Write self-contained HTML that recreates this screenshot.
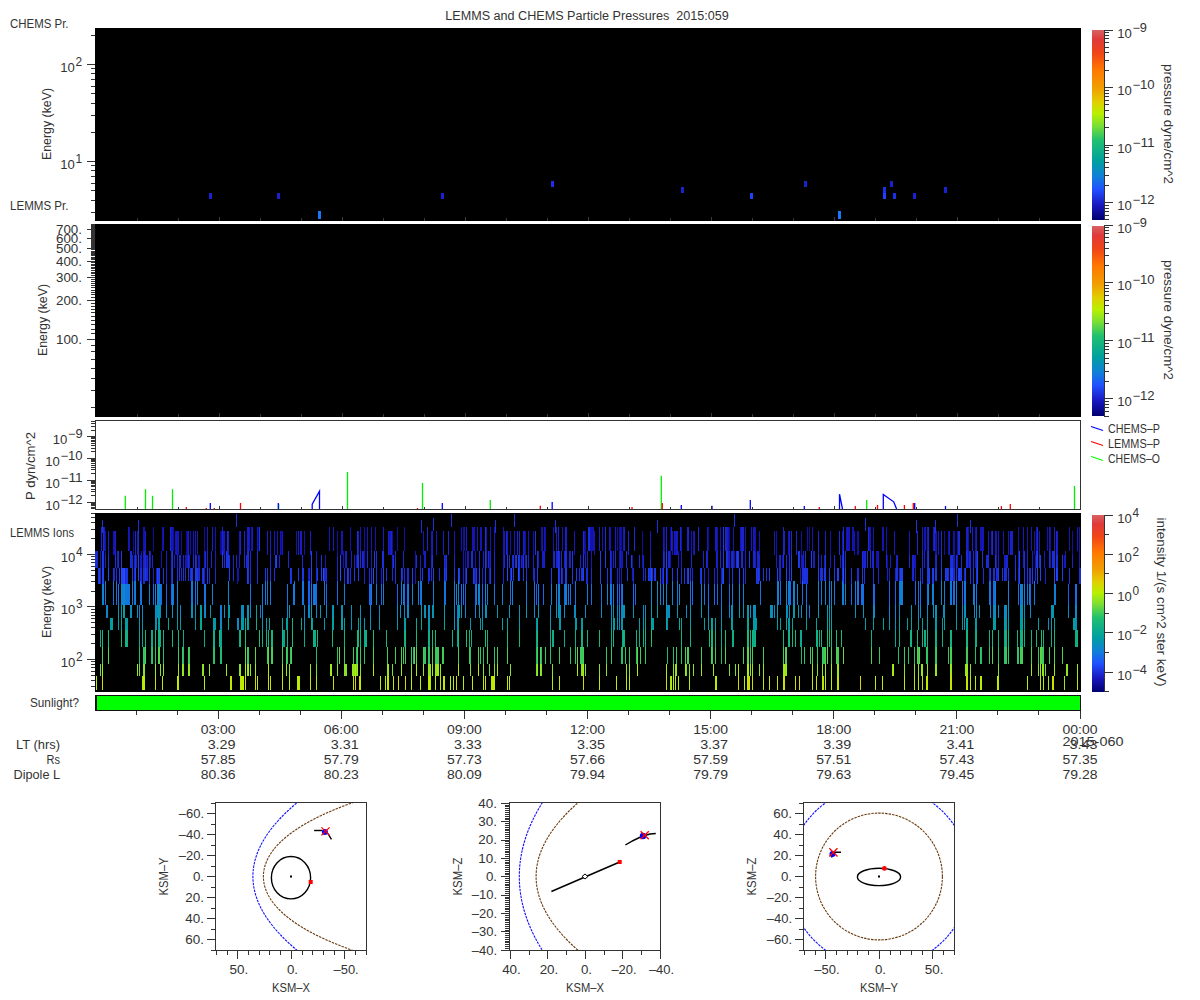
<!DOCTYPE html>
<html><head><meta charset="utf-8"><style>
html,body{margin:0;padding:0;background:#fff;}
svg{display:block;font-family:"Liberation Sans",sans-serif;}
</style></head><body>
<svg width="1200" height="1000" viewBox="0 0 1200 1000">
<text x="445.3" y="20" textLength="283.5" lengthAdjust="spacingAndGlyphs" font-size="12" fill="#333">LEMMS and CHEMS Particle Pressures  2015:059</text>
<rect x="95" y="28" width="986" height="193" fill="#000"/>
<line x1="91" y1="212.5" x2="95" y2="212.5" stroke="#333" stroke-width="1"/>
<line x1="91" y1="200.5" x2="95" y2="200.5" stroke="#333" stroke-width="1"/>
<line x1="91" y1="190.5" x2="95" y2="190.5" stroke="#333" stroke-width="1"/>
<line x1="91" y1="183.5" x2="95" y2="183.5" stroke="#333" stroke-width="1"/>
<line x1="91" y1="176.5" x2="95" y2="176.5" stroke="#333" stroke-width="1"/>
<line x1="91" y1="170.5" x2="95" y2="170.5" stroke="#333" stroke-width="1"/>
<line x1="91" y1="165.5" x2="95" y2="165.5" stroke="#333" stroke-width="1"/>
<line x1="87" y1="161.5" x2="95" y2="161.5" stroke="#333" stroke-width="1"/>
<line x1="91" y1="132.5" x2="95" y2="132.5" stroke="#333" stroke-width="1"/>
<line x1="91" y1="115.5" x2="95" y2="115.5" stroke="#333" stroke-width="1"/>
<line x1="91" y1="103.5" x2="95" y2="103.5" stroke="#333" stroke-width="1"/>
<line x1="91" y1="93.5" x2="95" y2="93.5" stroke="#333" stroke-width="1"/>
<line x1="91" y1="86.5" x2="95" y2="86.5" stroke="#333" stroke-width="1"/>
<line x1="91" y1="79.5" x2="95" y2="79.5" stroke="#333" stroke-width="1"/>
<line x1="91" y1="73.5" x2="95" y2="73.5" stroke="#333" stroke-width="1"/>
<line x1="91" y1="68.5" x2="95" y2="68.5" stroke="#333" stroke-width="1"/>
<line x1="87" y1="64.5" x2="95" y2="64.5" stroke="#333" stroke-width="1"/>
<line x1="91" y1="35.5" x2="95" y2="35.5" stroke="#333" stroke-width="1"/>
<text x="60.25" y="168.75" textLength="14.6" lengthAdjust="spacingAndGlyphs" font-size="12" fill="#333">10</text>
<text x="75.5" y="162.75" textLength="6.6" lengthAdjust="spacingAndGlyphs" font-size="12" fill="#333">1</text>
<text x="60.25" y="71.75" textLength="14.6" lengthAdjust="spacingAndGlyphs" font-size="12" fill="#333">10</text>
<text x="75.5" y="65.75" textLength="6.6" lengthAdjust="spacingAndGlyphs" font-size="12" fill="#333">2</text>
<text x="10" y="28" textLength="58.5" lengthAdjust="spacingAndGlyphs" font-size="12" fill="#333">CHEMS Pr.</text>
<text x="10" y="210" textLength="58.5" lengthAdjust="spacingAndGlyphs" font-size="12" fill="#333">LEMMS Pr.</text>
<text x="0" y="0" font-size="12" fill="#333" text-anchor="middle" textLength="72" lengthAdjust="spacingAndGlyphs" transform="translate(50.5,124) rotate(-90)">Energy (keV)</text>
<rect x="209" y="193" width="3" height="6" fill="#1a22d0"/>
<rect x="277" y="193" width="3" height="6" fill="#1a22d0"/>
<rect x="441" y="193" width="3" height="6" fill="#1a22d0"/>
<rect x="551" y="181" width="3" height="6" fill="#1a30e8"/>
<rect x="681" y="187" width="3" height="6" fill="#1a22d0"/>
<rect x="750" y="193" width="3" height="6" fill="#2040f8"/>
<rect x="804" y="181" width="3" height="6" fill="#1a22d0"/>
<rect x="883" y="187" width="3" height="6" fill="#1a30e8"/>
<rect x="883" y="193" width="3" height="6" fill="#2040ff"/>
<rect x="890" y="181" width="3" height="6" fill="#1a22d0"/>
<rect x="893" y="193" width="3" height="6" fill="#1a30e8"/>
<rect x="913" y="193" width="3" height="6" fill="#1a22d0"/>
<rect x="944" y="187" width="3" height="6" fill="#1a22d0"/>
<rect x="318" y="211" width="3" height="8" fill="#1a78f8"/>
<rect x="838" y="211" width="3" height="8" fill="#1a78f8"/>
<line x1="137.5" y1="218" x2="137.5" y2="221" stroke="#3a3a3a" stroke-width="1"/>
<line x1="178.5" y1="218" x2="178.5" y2="221" stroke="#3a3a3a" stroke-width="1"/>
<line x1="219.5" y1="217" x2="219.5" y2="221" stroke="#3a3a3a" stroke-width="1"/>
<line x1="260.5" y1="218" x2="260.5" y2="221" stroke="#3a3a3a" stroke-width="1"/>
<line x1="301.5" y1="218" x2="301.5" y2="221" stroke="#3a3a3a" stroke-width="1"/>
<line x1="342.5" y1="217" x2="342.5" y2="221" stroke="#3a3a3a" stroke-width="1"/>
<line x1="383.5" y1="218" x2="383.5" y2="221" stroke="#3a3a3a" stroke-width="1"/>
<line x1="424.5" y1="218" x2="424.5" y2="221" stroke="#3a3a3a" stroke-width="1"/>
<line x1="465.5" y1="217" x2="465.5" y2="221" stroke="#3a3a3a" stroke-width="1"/>
<line x1="506.5" y1="218" x2="506.5" y2="221" stroke="#3a3a3a" stroke-width="1"/>
<line x1="547.5" y1="218" x2="547.5" y2="221" stroke="#3a3a3a" stroke-width="1"/>
<line x1="588.5" y1="217" x2="588.5" y2="221" stroke="#3a3a3a" stroke-width="1"/>
<line x1="629.5" y1="218" x2="629.5" y2="221" stroke="#3a3a3a" stroke-width="1"/>
<line x1="670.5" y1="218" x2="670.5" y2="221" stroke="#3a3a3a" stroke-width="1"/>
<line x1="711.5" y1="217" x2="711.5" y2="221" stroke="#3a3a3a" stroke-width="1"/>
<line x1="752.5" y1="218" x2="752.5" y2="221" stroke="#3a3a3a" stroke-width="1"/>
<line x1="793.5" y1="218" x2="793.5" y2="221" stroke="#3a3a3a" stroke-width="1"/>
<line x1="834.5" y1="217" x2="834.5" y2="221" stroke="#3a3a3a" stroke-width="1"/>
<line x1="875.5" y1="218" x2="875.5" y2="221" stroke="#3a3a3a" stroke-width="1"/>
<line x1="916.5" y1="218" x2="916.5" y2="221" stroke="#3a3a3a" stroke-width="1"/>
<line x1="957.5" y1="217" x2="957.5" y2="221" stroke="#3a3a3a" stroke-width="1"/>
<line x1="998.5" y1="218" x2="998.5" y2="221" stroke="#3a3a3a" stroke-width="1"/>
<line x1="1039.5" y1="218" x2="1039.5" y2="221" stroke="#3a3a3a" stroke-width="1"/>
<rect x="95" y="224" width="986" height="193" fill="#000"/>
<line x1="137.5" y1="414" x2="137.5" y2="417" stroke="#3a3a3a" stroke-width="1"/>
<line x1="178.5" y1="414" x2="178.5" y2="417" stroke="#3a3a3a" stroke-width="1"/>
<line x1="219.5" y1="413" x2="219.5" y2="417" stroke="#3a3a3a" stroke-width="1"/>
<line x1="260.5" y1="414" x2="260.5" y2="417" stroke="#3a3a3a" stroke-width="1"/>
<line x1="301.5" y1="414" x2="301.5" y2="417" stroke="#3a3a3a" stroke-width="1"/>
<line x1="342.5" y1="413" x2="342.5" y2="417" stroke="#3a3a3a" stroke-width="1"/>
<line x1="383.5" y1="414" x2="383.5" y2="417" stroke="#3a3a3a" stroke-width="1"/>
<line x1="424.5" y1="414" x2="424.5" y2="417" stroke="#3a3a3a" stroke-width="1"/>
<line x1="465.5" y1="413" x2="465.5" y2="417" stroke="#3a3a3a" stroke-width="1"/>
<line x1="506.5" y1="414" x2="506.5" y2="417" stroke="#3a3a3a" stroke-width="1"/>
<line x1="547.5" y1="414" x2="547.5" y2="417" stroke="#3a3a3a" stroke-width="1"/>
<line x1="588.5" y1="413" x2="588.5" y2="417" stroke="#3a3a3a" stroke-width="1"/>
<line x1="629.5" y1="414" x2="629.5" y2="417" stroke="#3a3a3a" stroke-width="1"/>
<line x1="670.5" y1="414" x2="670.5" y2="417" stroke="#3a3a3a" stroke-width="1"/>
<line x1="711.5" y1="413" x2="711.5" y2="417" stroke="#3a3a3a" stroke-width="1"/>
<line x1="752.5" y1="414" x2="752.5" y2="417" stroke="#3a3a3a" stroke-width="1"/>
<line x1="793.5" y1="414" x2="793.5" y2="417" stroke="#3a3a3a" stroke-width="1"/>
<line x1="834.5" y1="413" x2="834.5" y2="417" stroke="#3a3a3a" stroke-width="1"/>
<line x1="875.5" y1="414" x2="875.5" y2="417" stroke="#3a3a3a" stroke-width="1"/>
<line x1="916.5" y1="414" x2="916.5" y2="417" stroke="#3a3a3a" stroke-width="1"/>
<line x1="957.5" y1="413" x2="957.5" y2="417" stroke="#3a3a3a" stroke-width="1"/>
<line x1="998.5" y1="414" x2="998.5" y2="417" stroke="#3a3a3a" stroke-width="1"/>
<line x1="1039.5" y1="414" x2="1039.5" y2="417" stroke="#3a3a3a" stroke-width="1"/>
<line x1="91" y1="407.5" x2="95" y2="407.5" stroke="#333" stroke-width="1"/>
<line x1="91" y1="390.5" x2="95" y2="390.5" stroke="#333" stroke-width="1"/>
<line x1="91" y1="378.5" x2="95" y2="378.5" stroke="#333" stroke-width="1"/>
<line x1="91" y1="368.5" x2="95" y2="368.5" stroke="#333" stroke-width="1"/>
<line x1="91" y1="359.5" x2="95" y2="359.5" stroke="#333" stroke-width="1"/>
<line x1="91" y1="351.5" x2="95" y2="351.5" stroke="#333" stroke-width="1"/>
<line x1="91" y1="345.5" x2="95" y2="345.5" stroke="#333" stroke-width="1"/>
<line x1="87" y1="339.5" x2="95" y2="339.5" stroke="#333" stroke-width="1"/>
<line x1="91" y1="333.5" x2="95" y2="333.5" stroke="#333" stroke-width="1"/>
<line x1="91" y1="329.5" x2="95" y2="329.5" stroke="#333" stroke-width="1"/>
<line x1="91" y1="324.5" x2="95" y2="324.5" stroke="#333" stroke-width="1"/>
<line x1="91" y1="320.5" x2="95" y2="320.5" stroke="#333" stroke-width="1"/>
<line x1="91" y1="316.5" x2="95" y2="316.5" stroke="#333" stroke-width="1"/>
<line x1="91" y1="312.5" x2="95" y2="312.5" stroke="#333" stroke-width="1"/>
<line x1="91" y1="309.5" x2="95" y2="309.5" stroke="#333" stroke-width="1"/>
<line x1="91" y1="306.5" x2="95" y2="306.5" stroke="#333" stroke-width="1"/>
<line x1="91" y1="303.5" x2="95" y2="303.5" stroke="#333" stroke-width="1"/>
<line x1="87" y1="300.5" x2="95" y2="300.5" stroke="#333" stroke-width="1"/>
<line x1="91" y1="297.5" x2="95" y2="297.5" stroke="#333" stroke-width="1"/>
<line x1="91" y1="294.5" x2="95" y2="294.5" stroke="#333" stroke-width="1"/>
<line x1="91" y1="292.5" x2="95" y2="292.5" stroke="#333" stroke-width="1"/>
<line x1="91" y1="290.5" x2="95" y2="290.5" stroke="#333" stroke-width="1"/>
<line x1="91" y1="287.5" x2="95" y2="287.5" stroke="#333" stroke-width="1"/>
<line x1="91" y1="285.5" x2="95" y2="285.5" stroke="#333" stroke-width="1"/>
<line x1="91" y1="283.5" x2="95" y2="283.5" stroke="#333" stroke-width="1"/>
<line x1="91" y1="281.5" x2="95" y2="281.5" stroke="#333" stroke-width="1"/>
<line x1="91" y1="279.5" x2="95" y2="279.5" stroke="#333" stroke-width="1"/>
<line x1="87" y1="277.5" x2="95" y2="277.5" stroke="#333" stroke-width="1"/>
<line x1="91" y1="275.5" x2="95" y2="275.5" stroke="#333" stroke-width="1"/>
<line x1="91" y1="273.5" x2="95" y2="273.5" stroke="#333" stroke-width="1"/>
<line x1="91" y1="272.5" x2="95" y2="272.5" stroke="#333" stroke-width="1"/>
<line x1="91" y1="270.5" x2="95" y2="270.5" stroke="#333" stroke-width="1"/>
<line x1="91" y1="268.5" x2="95" y2="268.5" stroke="#333" stroke-width="1"/>
<line x1="91" y1="267.5" x2="95" y2="267.5" stroke="#333" stroke-width="1"/>
<line x1="91" y1="265.5" x2="95" y2="265.5" stroke="#333" stroke-width="1"/>
<line x1="91" y1="264.5" x2="95" y2="264.5" stroke="#333" stroke-width="1"/>
<line x1="91" y1="262.5" x2="95" y2="262.5" stroke="#333" stroke-width="1"/>
<line x1="87" y1="261.5" x2="95" y2="261.5" stroke="#333" stroke-width="1"/>
<line x1="91" y1="259.5" x2="95" y2="259.5" stroke="#333" stroke-width="1"/>
<line x1="91" y1="258.5" x2="95" y2="258.5" stroke="#333" stroke-width="1"/>
<line x1="91" y1="257.5" x2="95" y2="257.5" stroke="#333" stroke-width="1"/>
<line x1="91" y1="255.5" x2="95" y2="255.5" stroke="#333" stroke-width="1"/>
<line x1="91" y1="254.5" x2="95" y2="254.5" stroke="#333" stroke-width="1"/>
<line x1="91" y1="253.5" x2="95" y2="253.5" stroke="#333" stroke-width="1"/>
<line x1="91" y1="252.5" x2="95" y2="252.5" stroke="#333" stroke-width="1"/>
<line x1="91" y1="251.5" x2="95" y2="251.5" stroke="#333" stroke-width="1"/>
<line x1="91" y1="249.5" x2="95" y2="249.5" stroke="#333" stroke-width="1"/>
<line x1="87" y1="248.5" x2="95" y2="248.5" stroke="#333" stroke-width="1"/>
<line x1="91" y1="247.5" x2="95" y2="247.5" stroke="#333" stroke-width="1"/>
<line x1="91" y1="246.5" x2="95" y2="246.5" stroke="#333" stroke-width="1"/>
<line x1="91" y1="245.5" x2="95" y2="245.5" stroke="#333" stroke-width="1"/>
<line x1="91" y1="244.5" x2="95" y2="244.5" stroke="#333" stroke-width="1"/>
<line x1="91" y1="243.5" x2="95" y2="243.5" stroke="#333" stroke-width="1"/>
<line x1="91" y1="242.5" x2="95" y2="242.5" stroke="#333" stroke-width="1"/>
<line x1="91" y1="241.5" x2="95" y2="241.5" stroke="#333" stroke-width="1"/>
<line x1="91" y1="240.5" x2="95" y2="240.5" stroke="#333" stroke-width="1"/>
<line x1="91" y1="239.5" x2="95" y2="239.5" stroke="#333" stroke-width="1"/>
<line x1="87" y1="238.5" x2="95" y2="238.5" stroke="#333" stroke-width="1"/>
<line x1="91" y1="237.5" x2="95" y2="237.5" stroke="#333" stroke-width="1"/>
<line x1="91" y1="236.5" x2="95" y2="236.5" stroke="#333" stroke-width="1"/>
<line x1="91" y1="235.5" x2="95" y2="235.5" stroke="#333" stroke-width="1"/>
<line x1="91" y1="234.5" x2="95" y2="234.5" stroke="#333" stroke-width="1"/>
<line x1="91" y1="233.5" x2="95" y2="233.5" stroke="#333" stroke-width="1"/>
<line x1="91" y1="233.5" x2="95" y2="233.5" stroke="#333" stroke-width="1"/>
<line x1="91" y1="232.5" x2="95" y2="232.5" stroke="#333" stroke-width="1"/>
<line x1="91" y1="231.5" x2="95" y2="231.5" stroke="#333" stroke-width="1"/>
<line x1="91" y1="230.5" x2="95" y2="230.5" stroke="#333" stroke-width="1"/>
<line x1="87" y1="229.5" x2="95" y2="229.5" stroke="#333" stroke-width="1"/>
<line x1="91" y1="228.5" x2="95" y2="228.5" stroke="#333" stroke-width="1"/>
<line x1="91" y1="228.5" x2="95" y2="228.5" stroke="#333" stroke-width="1"/>
<line x1="91" y1="227.5" x2="95" y2="227.5" stroke="#333" stroke-width="1"/>
<line x1="91" y1="226.5" x2="95" y2="226.5" stroke="#333" stroke-width="1"/>
<line x1="91" y1="225.5" x2="95" y2="225.5" stroke="#333" stroke-width="1"/>
<line x1="91" y1="225.5" x2="95" y2="225.5" stroke="#333" stroke-width="1"/>
<line x1="91" y1="224.5" x2="95" y2="224.5" stroke="#333" stroke-width="1"/>
<text x="82" y="343.8" text-anchor="end" textLength="26" lengthAdjust="spacingAndGlyphs" font-size="12" fill="#333">100.</text>
<text x="82" y="304.78651256194803" text-anchor="end" textLength="26" lengthAdjust="spacingAndGlyphs" font-size="12" fill="#333">200.</text>
<text x="82" y="281.9650853883318" text-anchor="end" textLength="26" lengthAdjust="spacingAndGlyphs" font-size="12" fill="#333">300.</text>
<text x="82" y="265.7730251238961" text-anchor="end" textLength="26" lengthAdjust="spacingAndGlyphs" font-size="12" fill="#333">400.</text>
<text x="82" y="253.21348743805197" text-anchor="end" textLength="26" lengthAdjust="spacingAndGlyphs" font-size="12" fill="#333">500.</text>
<text x="82" y="242.9515979502798" text-anchor="end" textLength="26" lengthAdjust="spacingAndGlyphs" font-size="12" fill="#333">600.</text>
<text x="82" y="234.27529401415234" text-anchor="end" textLength="26" lengthAdjust="spacingAndGlyphs" font-size="12" fill="#333">700.</text>
<text x="0" y="0" font-size="12" fill="#333" text-anchor="middle" textLength="72" lengthAdjust="spacingAndGlyphs" transform="translate(47,320) rotate(-90)">Energy (keV)</text>
<defs><linearGradient id="cb" x1="0" y1="0" x2="0" y2="1"><stop offset="0.0" stop-color="#d86262"/><stop offset="0.05" stop-color="#e03a3a"/><stop offset="0.12" stop-color="#f04418"/><stop offset="0.21" stop-color="#ff7800"/><stop offset="0.31" stop-color="#f0a000"/><stop offset="0.38" stop-color="#e0d000"/><stop offset="0.44" stop-color="#b8f000"/><stop offset="0.5" stop-color="#80e030"/><stop offset="0.58" stop-color="#20c070"/><stop offset="0.69" stop-color="#00a0a0"/><stop offset="0.77" stop-color="#1080d8"/><stop offset="0.84" stop-color="#2050ff"/><stop offset="0.92" stop-color="#1818c0"/><stop offset="1.0" stop-color="#000070"/></linearGradient></defs>
<rect x="1092" y="30" width="12" height="190" fill="url(#cb)"/>
<line x1="1104.5" y1="30" x2="1104.5" y2="220" stroke="#333" stroke-width="1"/>
<line x1="1104" y1="219.5" x2="1109" y2="219.5" stroke="#333" stroke-width="1"/>
<line x1="1104" y1="215.5" x2="1109" y2="215.5" stroke="#333" stroke-width="1"/>
<line x1="1104" y1="211.5" x2="1109" y2="211.5" stroke="#333" stroke-width="1"/>
<line x1="1104" y1="208.5" x2="1109" y2="208.5" stroke="#333" stroke-width="1"/>
<line x1="1104" y1="205.5" x2="1109" y2="205.5" stroke="#333" stroke-width="1"/>
<line x1="1104" y1="202.5" x2="1113" y2="202.5" stroke="#333" stroke-width="1"/>
<line x1="1104" y1="185.5" x2="1109" y2="185.5" stroke="#333" stroke-width="1"/>
<line x1="1104" y1="175.5" x2="1109" y2="175.5" stroke="#333" stroke-width="1"/>
<line x1="1104" y1="167.5" x2="1109" y2="167.5" stroke="#333" stroke-width="1"/>
<line x1="1104" y1="162.5" x2="1109" y2="162.5" stroke="#333" stroke-width="1"/>
<line x1="1104" y1="157.5" x2="1109" y2="157.5" stroke="#333" stroke-width="1"/>
<line x1="1104" y1="153.5" x2="1109" y2="153.5" stroke="#333" stroke-width="1"/>
<line x1="1104" y1="150.5" x2="1109" y2="150.5" stroke="#333" stroke-width="1"/>
<line x1="1104" y1="147.5" x2="1109" y2="147.5" stroke="#333" stroke-width="1"/>
<line x1="1104" y1="145.5" x2="1113" y2="145.5" stroke="#333" stroke-width="1"/>
<line x1="1104" y1="127.5" x2="1109" y2="127.5" stroke="#333" stroke-width="1"/>
<line x1="1104" y1="117.5" x2="1109" y2="117.5" stroke="#333" stroke-width="1"/>
<line x1="1104" y1="110.5" x2="1109" y2="110.5" stroke="#333" stroke-width="1"/>
<line x1="1104" y1="104.5" x2="1109" y2="104.5" stroke="#333" stroke-width="1"/>
<line x1="1104" y1="100.5" x2="1109" y2="100.5" stroke="#333" stroke-width="1"/>
<line x1="1104" y1="96.5" x2="1109" y2="96.5" stroke="#333" stroke-width="1"/>
<line x1="1104" y1="93.5" x2="1109" y2="93.5" stroke="#333" stroke-width="1"/>
<line x1="1104" y1="90.5" x2="1109" y2="90.5" stroke="#333" stroke-width="1"/>
<line x1="1104" y1="87.5" x2="1113" y2="87.5" stroke="#333" stroke-width="1"/>
<line x1="1104" y1="70.5" x2="1109" y2="70.5" stroke="#333" stroke-width="1"/>
<line x1="1104" y1="60.5" x2="1109" y2="60.5" stroke="#333" stroke-width="1"/>
<line x1="1104" y1="52.5" x2="1109" y2="52.5" stroke="#333" stroke-width="1"/>
<line x1="1104" y1="47.5" x2="1109" y2="47.5" stroke="#333" stroke-width="1"/>
<line x1="1104" y1="42.5" x2="1109" y2="42.5" stroke="#333" stroke-width="1"/>
<line x1="1104" y1="38.5" x2="1109" y2="38.5" stroke="#333" stroke-width="1"/>
<line x1="1104" y1="35.5" x2="1109" y2="35.5" stroke="#333" stroke-width="1"/>
<line x1="1104" y1="32.5" x2="1109" y2="32.5" stroke="#333" stroke-width="1"/>
<line x1="1104" y1="30.5" x2="1113" y2="30.5" stroke="#333" stroke-width="1"/>
<text x="1117.15" y="37.75" textLength="14.6" lengthAdjust="spacingAndGlyphs" font-size="12" fill="#333">10</text>
<text x="1132.4" y="31.75" textLength="14.6" lengthAdjust="spacingAndGlyphs" font-size="12" fill="#333">−9</text>
<text x="1117.15" y="94.75" textLength="14.6" lengthAdjust="spacingAndGlyphs" font-size="12" fill="#333">10</text>
<text x="1132.4" y="88.75" textLength="22.2" lengthAdjust="spacingAndGlyphs" font-size="12" fill="#333">−10</text>
<text x="1117.15" y="152.75" textLength="14.6" lengthAdjust="spacingAndGlyphs" font-size="12" fill="#333">10</text>
<text x="1132.4" y="146.75" textLength="22.2" lengthAdjust="spacingAndGlyphs" font-size="12" fill="#333">−11</text>
<text x="1117.15" y="209.75" textLength="14.6" lengthAdjust="spacingAndGlyphs" font-size="12" fill="#333">10</text>
<text x="1132.4" y="203.75" textLength="22.2" lengthAdjust="spacingAndGlyphs" font-size="12" fill="#333">−12</text>
<text x="0" y="0" font-size="12" fill="#333" text-anchor="middle" textLength="120" lengthAdjust="spacingAndGlyphs" transform="translate(1164,124) rotate(90)">pressure dyne/cm^2</text>
<rect x="1092" y="226" width="12" height="190" fill="url(#cb)"/>
<line x1="1104.5" y1="226" x2="1104.5" y2="416" stroke="#333" stroke-width="1"/>
<line x1="1104" y1="416.5" x2="1109" y2="416.5" stroke="#333" stroke-width="1"/>
<line x1="1104" y1="411.5" x2="1109" y2="411.5" stroke="#333" stroke-width="1"/>
<line x1="1104" y1="407.5" x2="1109" y2="407.5" stroke="#333" stroke-width="1"/>
<line x1="1104" y1="404.5" x2="1109" y2="404.5" stroke="#333" stroke-width="1"/>
<line x1="1104" y1="401.5" x2="1109" y2="401.5" stroke="#333" stroke-width="1"/>
<line x1="1104" y1="398.5" x2="1113" y2="398.5" stroke="#333" stroke-width="1"/>
<line x1="1104" y1="381.5" x2="1109" y2="381.5" stroke="#333" stroke-width="1"/>
<line x1="1104" y1="371.5" x2="1109" y2="371.5" stroke="#333" stroke-width="1"/>
<line x1="1104" y1="363.5" x2="1109" y2="363.5" stroke="#333" stroke-width="1"/>
<line x1="1104" y1="358.5" x2="1109" y2="358.5" stroke="#333" stroke-width="1"/>
<line x1="1104" y1="353.5" x2="1109" y2="353.5" stroke="#333" stroke-width="1"/>
<line x1="1104" y1="349.5" x2="1109" y2="349.5" stroke="#333" stroke-width="1"/>
<line x1="1104" y1="346.5" x2="1109" y2="346.5" stroke="#333" stroke-width="1"/>
<line x1="1104" y1="343.5" x2="1109" y2="343.5" stroke="#333" stroke-width="1"/>
<line x1="1104" y1="340.5" x2="1113" y2="340.5" stroke="#333" stroke-width="1"/>
<line x1="1104" y1="323.5" x2="1109" y2="323.5" stroke="#333" stroke-width="1"/>
<line x1="1104" y1="313.5" x2="1109" y2="313.5" stroke="#333" stroke-width="1"/>
<line x1="1104" y1="305.5" x2="1109" y2="305.5" stroke="#333" stroke-width="1"/>
<line x1="1104" y1="300.5" x2="1109" y2="300.5" stroke="#333" stroke-width="1"/>
<line x1="1104" y1="295.5" x2="1109" y2="295.5" stroke="#333" stroke-width="1"/>
<line x1="1104" y1="291.5" x2="1109" y2="291.5" stroke="#333" stroke-width="1"/>
<line x1="1104" y1="288.5" x2="1109" y2="288.5" stroke="#333" stroke-width="1"/>
<line x1="1104" y1="285.5" x2="1109" y2="285.5" stroke="#333" stroke-width="1"/>
<line x1="1104" y1="282.5" x2="1113" y2="282.5" stroke="#333" stroke-width="1"/>
<line x1="1104" y1="265.5" x2="1109" y2="265.5" stroke="#333" stroke-width="1"/>
<line x1="1104" y1="255.5" x2="1109" y2="255.5" stroke="#333" stroke-width="1"/>
<line x1="1104" y1="248.5" x2="1109" y2="248.5" stroke="#333" stroke-width="1"/>
<line x1="1104" y1="242.5" x2="1109" y2="242.5" stroke="#333" stroke-width="1"/>
<line x1="1104" y1="237.5" x2="1109" y2="237.5" stroke="#333" stroke-width="1"/>
<line x1="1104" y1="233.5" x2="1109" y2="233.5" stroke="#333" stroke-width="1"/>
<line x1="1104" y1="230.5" x2="1109" y2="230.5" stroke="#333" stroke-width="1"/>
<line x1="1104" y1="227.5" x2="1109" y2="227.5" stroke="#333" stroke-width="1"/>
<line x1="1104" y1="225.5" x2="1113" y2="225.5" stroke="#333" stroke-width="1"/>
<text x="1117.15" y="232.75" textLength="14.6" lengthAdjust="spacingAndGlyphs" font-size="12" fill="#333">10</text>
<text x="1132.4" y="226.75" textLength="14.6" lengthAdjust="spacingAndGlyphs" font-size="12" fill="#333">−9</text>
<text x="1117.15" y="289.75" textLength="14.6" lengthAdjust="spacingAndGlyphs" font-size="12" fill="#333">10</text>
<text x="1132.4" y="283.75" textLength="22.2" lengthAdjust="spacingAndGlyphs" font-size="12" fill="#333">−10</text>
<text x="1117.15" y="347.75" textLength="14.6" lengthAdjust="spacingAndGlyphs" font-size="12" fill="#333">10</text>
<text x="1132.4" y="341.75" textLength="22.2" lengthAdjust="spacingAndGlyphs" font-size="12" fill="#333">−11</text>
<text x="1117.15" y="405.75" textLength="14.6" lengthAdjust="spacingAndGlyphs" font-size="12" fill="#333">10</text>
<text x="1132.4" y="399.75" textLength="22.2" lengthAdjust="spacingAndGlyphs" font-size="12" fill="#333">−12</text>
<text x="0" y="0" font-size="12" fill="#333" text-anchor="middle" textLength="120" lengthAdjust="spacingAndGlyphs" transform="translate(1164,320) rotate(90)">pressure dyne/cm^2</text>
<rect x="95.5" y="420.5" width="985" height="89.0" fill="#fff" stroke="#333" stroke-width="1"/>
<line x1="91" y1="508.5" x2="95" y2="508.5" stroke="#333" stroke-width="1"/>
<line x1="91" y1="507.5" x2="95" y2="507.5" stroke="#333" stroke-width="1"/>
<line x1="91" y1="505.5" x2="95" y2="505.5" stroke="#333" stroke-width="1"/>
<line x1="91" y1="504.5" x2="95" y2="504.5" stroke="#333" stroke-width="1"/>
<line x1="91" y1="503.5" x2="95" y2="503.5" stroke="#333" stroke-width="1"/>
<line x1="87" y1="502.5" x2="95" y2="502.5" stroke="#333" stroke-width="1"/>
<line x1="91" y1="495.5" x2="95" y2="495.5" stroke="#333" stroke-width="1"/>
<line x1="91" y1="491.5" x2="95" y2="491.5" stroke="#333" stroke-width="1"/>
<line x1="91" y1="489.5" x2="95" y2="489.5" stroke="#333" stroke-width="1"/>
<line x1="91" y1="486.5" x2="95" y2="486.5" stroke="#333" stroke-width="1"/>
<line x1="91" y1="485.5" x2="95" y2="485.5" stroke="#333" stroke-width="1"/>
<line x1="91" y1="483.5" x2="95" y2="483.5" stroke="#333" stroke-width="1"/>
<line x1="91" y1="482.5" x2="95" y2="482.5" stroke="#333" stroke-width="1"/>
<line x1="91" y1="481.5" x2="95" y2="481.5" stroke="#333" stroke-width="1"/>
<line x1="87" y1="480.5" x2="95" y2="480.5" stroke="#333" stroke-width="1"/>
<line x1="91" y1="473.5" x2="95" y2="473.5" stroke="#333" stroke-width="1"/>
<line x1="91" y1="469.5" x2="95" y2="469.5" stroke="#333" stroke-width="1"/>
<line x1="91" y1="467.5" x2="95" y2="467.5" stroke="#333" stroke-width="1"/>
<line x1="91" y1="465.5" x2="95" y2="465.5" stroke="#333" stroke-width="1"/>
<line x1="91" y1="463.5" x2="95" y2="463.5" stroke="#333" stroke-width="1"/>
<line x1="91" y1="461.5" x2="95" y2="461.5" stroke="#333" stroke-width="1"/>
<line x1="91" y1="460.5" x2="95" y2="460.5" stroke="#333" stroke-width="1"/>
<line x1="91" y1="459.5" x2="95" y2="459.5" stroke="#333" stroke-width="1"/>
<line x1="87" y1="458.5" x2="95" y2="458.5" stroke="#333" stroke-width="1"/>
<line x1="91" y1="451.5" x2="95" y2="451.5" stroke="#333" stroke-width="1"/>
<line x1="91" y1="448.5" x2="95" y2="448.5" stroke="#333" stroke-width="1"/>
<line x1="91" y1="445.5" x2="95" y2="445.5" stroke="#333" stroke-width="1"/>
<line x1="91" y1="443.5" x2="95" y2="443.5" stroke="#333" stroke-width="1"/>
<line x1="91" y1="441.5" x2="95" y2="441.5" stroke="#333" stroke-width="1"/>
<line x1="91" y1="440.5" x2="95" y2="440.5" stroke="#333" stroke-width="1"/>
<line x1="91" y1="438.5" x2="95" y2="438.5" stroke="#333" stroke-width="1"/>
<line x1="91" y1="437.5" x2="95" y2="437.5" stroke="#333" stroke-width="1"/>
<line x1="87" y1="436.5" x2="95" y2="436.5" stroke="#333" stroke-width="1"/>
<line x1="91" y1="430.5" x2="95" y2="430.5" stroke="#333" stroke-width="1"/>
<line x1="91" y1="426.5" x2="95" y2="426.5" stroke="#333" stroke-width="1"/>
<line x1="91" y1="423.5" x2="95" y2="423.5" stroke="#333" stroke-width="1"/>
<line x1="91" y1="421.5" x2="95" y2="421.5" stroke="#333" stroke-width="1"/>
<text x="52.75" y="443.75" textLength="14.6" lengthAdjust="spacingAndGlyphs" font-size="12" fill="#333">10</text>
<text x="68.0" y="437.75" textLength="14.6" lengthAdjust="spacingAndGlyphs" font-size="12" fill="#333">−9</text>
<text x="45.15" y="465.75" textLength="14.6" lengthAdjust="spacingAndGlyphs" font-size="12" fill="#333">10</text>
<text x="60.4" y="459.75" textLength="22.2" lengthAdjust="spacingAndGlyphs" font-size="12" fill="#333">−10</text>
<text x="45.15" y="487.75" textLength="14.6" lengthAdjust="spacingAndGlyphs" font-size="12" fill="#333">10</text>
<text x="60.4" y="481.75" textLength="22.2" lengthAdjust="spacingAndGlyphs" font-size="12" fill="#333">−11</text>
<text x="45.15" y="509.75" textLength="14.6" lengthAdjust="spacingAndGlyphs" font-size="12" fill="#333">10</text>
<text x="60.4" y="503.75" textLength="22.2" lengthAdjust="spacingAndGlyphs" font-size="12" fill="#333">−12</text>
<text x="0" y="0" font-size="12" fill="#333" text-anchor="middle" textLength="68" lengthAdjust="spacingAndGlyphs" transform="translate(35,466) rotate(-90)">P dyn/cm^2</text>
<line x1="1091" y1="426.5" x2="1103" y2="430.5" stroke="#0000ff" stroke-width="1.3"/>
<text x="1108" y="433" textLength="52" lengthAdjust="spacingAndGlyphs" font-size="12" fill="#333">CHEMS–P</text>
<line x1="1091" y1="441.5" x2="1103" y2="445.5" stroke="#ff0000" stroke-width="1.3"/>
<text x="1108" y="448" textLength="52" lengthAdjust="spacingAndGlyphs" font-size="12" fill="#333">LEMMS–P</text>
<line x1="1091" y1="456.5" x2="1103" y2="460.5" stroke="#00ff00" stroke-width="1.3"/>
<text x="1108" y="463" textLength="52" lengthAdjust="spacingAndGlyphs" font-size="12" fill="#333">CHEMS–O</text>
<line x1="125.3" y1="509" x2="125.3" y2="495.8" stroke="#00ee00" stroke-width="1.3"/>
<line x1="145.5" y1="509" x2="145.5" y2="489.2" stroke="#00ee00" stroke-width="1.3"/>
<line x1="152.5" y1="509" x2="152.5" y2="495.8" stroke="#00ee00" stroke-width="1.3"/>
<line x1="172.5" y1="509" x2="172.5" y2="489.2" stroke="#00ee00" stroke-width="1.3"/>
<line x1="347.5" y1="509" x2="347.5" y2="472" stroke="#00ee00" stroke-width="1.3"/>
<line x1="422.5" y1="509" x2="422.5" y2="483" stroke="#00ee00" stroke-width="1.3"/>
<line x1="490.3" y1="509" x2="490.3" y2="500" stroke="#00ee00" stroke-width="1.3"/>
<line x1="661.3" y1="509" x2="661.3" y2="475.8" stroke="#00ee00" stroke-width="1.3"/>
<line x1="866.7" y1="509" x2="866.7" y2="500" stroke="#00ee00" stroke-width="1.3"/>
<line x1="1074.5" y1="509" x2="1074.5" y2="486" stroke="#00ee00" stroke-width="1.3"/>
<line x1="278.7" y1="509" x2="278.7" y2="504" stroke="#00ee00" stroke-width="1.3"/>
<line x1="186.3" y1="509" x2="186.3" y2="507" stroke="#ff0000" stroke-width="1.3"/>
<line x1="206.3" y1="509" x2="206.3" y2="508" stroke="#ff0000" stroke-width="1.3"/>
<line x1="214.3" y1="509" x2="214.3" y2="508" stroke="#ff0000" stroke-width="1.3"/>
<line x1="240.5" y1="509" x2="240.5" y2="503" stroke="#ff0000" stroke-width="1.3"/>
<line x1="540.3" y1="509" x2="540.3" y2="505.8" stroke="#ff0000" stroke-width="1.3"/>
<line x1="632" y1="509" x2="632" y2="507" stroke="#ff0000" stroke-width="1.3"/>
<line x1="662.3" y1="509" x2="662.3" y2="503" stroke="#ff0000" stroke-width="1.3"/>
<line x1="819.3" y1="509" x2="819.3" y2="507" stroke="#ff0000" stroke-width="1.3"/>
<line x1="855.3" y1="509" x2="855.3" y2="506" stroke="#ff0000" stroke-width="1.3"/>
<line x1="877.5" y1="509" x2="877.5" y2="505" stroke="#ff0000" stroke-width="1.3"/>
<line x1="904.4" y1="509" x2="904.4" y2="505" stroke="#ff0000" stroke-width="1.3"/>
<line x1="913.3" y1="509" x2="913.3" y2="503" stroke="#ff0000" stroke-width="1.3"/>
<line x1="1001.4" y1="509" x2="1001.4" y2="506" stroke="#ff0000" stroke-width="1.3"/>
<line x1="1010.3" y1="509" x2="1010.3" y2="504" stroke="#ff0000" stroke-width="1.3"/>
<line x1="417.5" y1="509" x2="417.5" y2="508" stroke="#ff0000" stroke-width="1.3"/>
<line x1="210.3" y1="509" x2="210.3" y2="503" stroke="#0000ff" stroke-width="1.3"/>
<line x1="278.3" y1="509" x2="278.3" y2="503" stroke="#0000ff" stroke-width="1.3"/>
<line x1="442.3" y1="509" x2="442.3" y2="503" stroke="#0000ff" stroke-width="1.3"/>
<line x1="552.2" y1="509" x2="552.2" y2="502" stroke="#0000ff" stroke-width="1.3"/>
<line x1="681.3" y1="509" x2="681.3" y2="505" stroke="#0000ff" stroke-width="1.3"/>
<line x1="712" y1="509" x2="712" y2="505.8" stroke="#0000ff" stroke-width="1.3"/>
<line x1="750.3" y1="509" x2="750.3" y2="500" stroke="#0000ff" stroke-width="1.3"/>
<line x1="804.3" y1="509" x2="804.3" y2="506" stroke="#0000ff" stroke-width="1.3"/>
<line x1="945.5" y1="509" x2="945.5" y2="506" stroke="#0000ff" stroke-width="1.3"/>
<line x1="914.7" y1="509" x2="914.7" y2="503" stroke="#0000ff" stroke-width="1.3"/>
<polyline points="312.2,509 312.2,504.2 319.5,491.2 319.5,509" fill="none" stroke="#0000ff" stroke-width="1.3"/>
<polyline points="839.5,509 839.5,494.2 842.5,509" fill="none" stroke="#0000ff" stroke-width="1.3"/>
<polyline points="883.3,509 883.3,494.4 893.7,501.8 896.6,509" fill="none" stroke="#0000ff" stroke-width="1.3"/>
<line x1="137.5" y1="507" x2="137.5" y2="509" stroke="#333" stroke-width="1"/>
<line x1="178.5" y1="507" x2="178.5" y2="509" stroke="#333" stroke-width="1"/>
<line x1="219.5" y1="506" x2="219.5" y2="509" stroke="#333" stroke-width="1"/>
<line x1="260.5" y1="507" x2="260.5" y2="509" stroke="#333" stroke-width="1"/>
<line x1="301.5" y1="507" x2="301.5" y2="509" stroke="#333" stroke-width="1"/>
<line x1="342.5" y1="506" x2="342.5" y2="509" stroke="#333" stroke-width="1"/>
<line x1="383.5" y1="507" x2="383.5" y2="509" stroke="#333" stroke-width="1"/>
<line x1="424.5" y1="507" x2="424.5" y2="509" stroke="#333" stroke-width="1"/>
<line x1="465.5" y1="506" x2="465.5" y2="509" stroke="#333" stroke-width="1"/>
<line x1="506.5" y1="507" x2="506.5" y2="509" stroke="#333" stroke-width="1"/>
<line x1="547.5" y1="507" x2="547.5" y2="509" stroke="#333" stroke-width="1"/>
<line x1="588.5" y1="506" x2="588.5" y2="509" stroke="#333" stroke-width="1"/>
<line x1="629.5" y1="507" x2="629.5" y2="509" stroke="#333" stroke-width="1"/>
<line x1="670.5" y1="507" x2="670.5" y2="509" stroke="#333" stroke-width="1"/>
<line x1="711.5" y1="506" x2="711.5" y2="509" stroke="#333" stroke-width="1"/>
<line x1="752.5" y1="507" x2="752.5" y2="509" stroke="#333" stroke-width="1"/>
<line x1="793.5" y1="507" x2="793.5" y2="509" stroke="#333" stroke-width="1"/>
<line x1="834.5" y1="506" x2="834.5" y2="509" stroke="#333" stroke-width="1"/>
<line x1="875.5" y1="507" x2="875.5" y2="509" stroke="#333" stroke-width="1"/>
<line x1="916.5" y1="507" x2="916.5" y2="509" stroke="#333" stroke-width="1"/>
<line x1="957.5" y1="506" x2="957.5" y2="509" stroke="#333" stroke-width="1"/>
<line x1="998.5" y1="507" x2="998.5" y2="509" stroke="#333" stroke-width="1"/>
<line x1="1039.5" y1="507" x2="1039.5" y2="509" stroke="#333" stroke-width="1"/>
<rect x="95" y="513" width="986" height="179" fill="#000"/>
<path fill="#1b2dd8" d="M95 551h1v17h-1zM96 551h1v17h-1zM113 568h1v13h-1zM116 568h1v13h-1zM118 551h1v17h-1zM134 568h1v13h-1zM141 568h1v16h-1zM143 568h1v16h-1zM149 551h1v17h-1zM185 568h1v13h-1zM190 568h1v13h-1zM199 568h1v13h-1zM227 531h1v24h-1zM244 555h1v13h-1zM257 551h1v17h-1zM326 568h1v16h-1zM350 568h1v16h-1zM357 531h1v24h-1zM367 551h1v17h-1zM376 551h1v17h-1zM402 568h1v13h-1zM416 555h1v13h-1zM428 568h1v16h-1zM431 568h1v13h-1zM472 551h1v17h-1zM474 568h1v16h-1zM494 568h1v16h-1zM509 555h1v13h-1zM513 555h1v13h-1zM579 568h1v13h-1zM587 568h1v16h-1zM588 527h1v24h-1zM605 527h1v24h-1zM615 551h1v17h-1zM645 568h1v13h-1zM690 568h1v13h-1zM727 551h1v17h-1zM780 568h1v13h-1zM783 551h1v17h-1zM786 555h1v13h-1zM789 555h1v13h-1zM803 568h1v16h-1zM805 551h1v17h-1zM806 568h1v16h-1zM820 568h1v13h-1zM822 568h1v13h-1zM843 527h1v24h-1zM845 551h1v17h-1zM867 551h1v17h-1zM920 568h1v13h-1zM922 568h1v16h-1zM948 568h1v13h-1zM950 555h1v13h-1zM954 568h1v13h-1zM966 551h1v17h-1zM983 568h1v16h-1zM993 568h1v13h-1zM994 568h1v13h-1zM996 568h1v13h-1zM997 568h1v13h-1zM1004 568h1v13h-1zM1005 568h1v13h-1zM1024 551h1v17h-1zM1039 555h1v13h-1zM1049 551h1v17h-1zM1052 551h1v17h-1zM1053 551h1v17h-1zM1057 555h1v13h-1zM1069 568h1v16h-1zM1079 568h1v16h-1z"/>
<path fill="#bbed00" d="M96 676h1v14h-1zM411 676h1v14h-1zM430 676h1v14h-1zM444 676h1v14h-1zM450 676h1v14h-1zM478 664h1v12h-1zM491 676h1v14h-1zM493 676h1v14h-1zM494 676h1v14h-1zM715 676h1v14h-1zM926 676h1v14h-1zM975 676h1v14h-1zM1043 676h1v14h-1zM1077 676h1v14h-1z"/>
<path fill="#1a26d0" d="M97 551h1v17h-1zM101 527h1v24h-1zM114 568h1v13h-1zM132 555h1v13h-1zM135 531h1v24h-1zM140 568h1v13h-1zM144 551h1v17h-1zM146 568h1v13h-1zM166 568h1v16h-1zM171 568h1v16h-1zM179 555h1v13h-1zM180 555h1v13h-1zM198 568h1v13h-1zM207 551h1v17h-1zM244 531h1v24h-1zM250 551h1v17h-1zM270 555h1v13h-1zM288 551h1v17h-1zM309 568h1v13h-1zM316 568h1v16h-1zM337 568h1v13h-1zM362 551h1v17h-1zM369 568h1v16h-1zM403 551h1v17h-1zM408 568h1v16h-1zM427 527h1v24h-1zM445 568h1v13h-1zM448 531h1v24h-1zM490 551h1v17h-1zM494 551h1v17h-1zM504 555h1v13h-1zM506 531h1v24h-1zM517 531h1v24h-1zM528 555h1v13h-1zM534 568h1v13h-1zM556 551h1v17h-1zM557 551h1v17h-1zM562 568h1v16h-1zM583 531h1v24h-1zM628 531h1v24h-1zM633 568h1v16h-1zM652 568h1v13h-1zM666 527h1v24h-1zM680 527h1v24h-1zM692 568h1v13h-1zM706 551h1v17h-1zM717 568h1v16h-1zM720 551h1v17h-1zM725 527h1v24h-1zM741 551h1v17h-1zM742 527h1v24h-1zM745 568h1v16h-1zM754 551h1v17h-1zM759 555h1v13h-1zM779 568h1v13h-1zM796 531h1v24h-1zM865 551h1v17h-1zM873 551h1v17h-1zM912 568h1v13h-1zM917 531h1v24h-1zM928 527h1v24h-1zM934 527h1v24h-1zM936 555h1v13h-1zM953 568h1v13h-1zM964 568h1v13h-1zM970 551h1v17h-1zM989 568h1v13h-1zM1006 555h1v13h-1zM1056 531h1v24h-1z"/>
<path fill="#1c34e0" d="M98 568h1v16h-1zM103 551h1v17h-1zM108 555h1v13h-1zM163 568h1v16h-1zM172 551h1v17h-1zM188 568h1v13h-1zM192 568h1v13h-1zM202 568h1v16h-1zM248 568h1v16h-1zM259 527h1v24h-1zM291 568h1v16h-1zM344 568h1v16h-1zM348 568h1v16h-1zM371 568h1v16h-1zM376 568h1v16h-1zM386 568h1v13h-1zM393 555h1v13h-1zM519 555h1v13h-1zM526 568h1v13h-1zM535 531h1v24h-1zM558 551h1v17h-1zM565 551h1v17h-1zM581 568h1v13h-1zM582 568h1v13h-1zM583 555h1v13h-1zM649 568h1v13h-1zM700 568h1v16h-1zM763 568h1v13h-1zM766 568h1v13h-1zM804 568h1v16h-1zM805 568h1v16h-1zM807 568h1v16h-1zM818 555h1v13h-1zM842 568h1v13h-1zM896 568h1v13h-1zM941 555h1v13h-1zM946 568h1v13h-1zM970 568h1v16h-1zM995 555h1v13h-1zM1008 568h1v13h-1zM1027 568h1v16h-1zM1054 551h1v17h-1zM1056 555h1v13h-1z"/>
<path fill="#1e42ef" d="M99 568h1v16h-1zM138 555h1v13h-1zM276 555h1v13h-1zM311 551h1v17h-1zM321 568h1v13h-1zM466 568h1v16h-1zM479 568h1v16h-1zM485 568h1v16h-1zM558 568h1v16h-1zM583 568h1v13h-1zM600 568h1v16h-1zM688 568h1v16h-1zM777 568h1v13h-1zM786 568h1v13h-1zM811 551h1v17h-1zM818 568h1v13h-1zM837 568h1v13h-1zM838 568h1v13h-1zM845 568h1v16h-1zM900 568h1v13h-1zM902 568h1v13h-1zM951 568h1v13h-1zM952 568h1v13h-1zM977 551h1v17h-1zM1057 568h1v13h-1z"/>
<path fill="#1313b1" d="M100 551h1v17h-1zM144 527h1v24h-1zM171 527h1v24h-1zM177 531h1v24h-1zM187 531h1v24h-1zM237 568h1v16h-1zM251 527h1v24h-1zM280 531h1v24h-1zM296 531h1v24h-1zM343 551h1v17h-1zM356 555h1v13h-1zM375 527h1v24h-1zM473 527h1v24h-1zM474 527h1v24h-1zM553 527h1v24h-1zM591 527h1v24h-1zM602 527h1v24h-1zM610 527h1v24h-1zM681 527h1v24h-1zM728 527h1v24h-1zM755 527h1v24h-1zM852 527h1v24h-1zM853 527h1v24h-1zM877 551h1v17h-1zM924 527h1v24h-1zM935 531h1v24h-1zM936 531h1v24h-1zM981 527h1v24h-1zM1047 527h1v24h-1zM1069 527h1v24h-1z"/>
<path fill="#1a22cc" d="M100 568h1v16h-1zM108 531h1v24h-1zM147 555h1v13h-1zM152 555h1v13h-1zM171 551h1v17h-1zM177 555h1v13h-1zM183 555h1v13h-1zM196 555h1v13h-1zM204 568h1v16h-1zM211 551h1v17h-1zM222 527h1v24h-1zM233 555h1v13h-1zM236 555h1v13h-1zM240 531h1v24h-1zM279 555h1v13h-1zM325 568h1v13h-1zM337 555h1v13h-1zM346 551h1v17h-1zM364 568h1v16h-1zM391 531h1v24h-1zM431 555h1v13h-1zM454 555h1v13h-1zM482 568h1v16h-1zM503 568h1v16h-1zM510 568h1v13h-1zM519 531h1v24h-1zM521 555h1v13h-1zM553 551h1v17h-1zM558 527h1v24h-1zM565 527h1v24h-1zM569 551h1v17h-1zM580 555h1v13h-1zM650 555h1v13h-1zM668 551h1v17h-1zM671 527h1v24h-1zM687 527h1v24h-1zM688 527h1v24h-1zM703 551h1v17h-1zM707 551h1v17h-1zM714 568h1v16h-1zM726 527h1v24h-1zM729 568h1v16h-1zM731 551h1v17h-1zM743 527h1v24h-1zM753 551h1v17h-1zM757 551h1v17h-1zM758 551h1v17h-1zM779 555h1v13h-1zM780 555h1v13h-1zM783 527h1v24h-1zM784 531h1v24h-1zM818 531h1v24h-1zM834 555h1v13h-1zM864 551h1v17h-1zM872 551h1v17h-1zM878 568h1v16h-1zM886 551h1v17h-1zM895 568h1v13h-1zM897 555h1v13h-1zM899 568h1v13h-1zM912 555h1v13h-1zM913 555h1v13h-1zM935 555h1v13h-1zM967 527h1v24h-1zM1007 555h1v13h-1zM1011 531h1v24h-1zM1027 551h1v17h-1zM1072 555h1v13h-1z"/>
<path fill="#09a993" d="M100 630h1v17h-1zM151 630h1v17h-1zM204 630h1v17h-1zM220 630h1v17h-1zM304 630h1v17h-1zM364 630h1v17h-1zM666 618h1v12h-1zM800 630h1v17h-1z"/>
<path fill="#6eda3c" d="M100 664h1v12h-1z"/>
<path fill="#1e3eeb" d="M102 551h1v17h-1zM247 568h1v16h-1zM275 555h1v13h-1zM358 568h1v13h-1zM412 568h1v16h-1zM433 568h1v13h-1zM444 568h1v13h-1zM446 568h1v13h-1zM537 568h1v16h-1zM551 568h1v16h-1zM566 568h1v16h-1zM600 551h1v17h-1zM648 568h1v13h-1zM655 568h1v13h-1zM663 568h1v16h-1zM666 551h1v17h-1zM701 568h1v16h-1zM737 551h1v17h-1zM743 568h1v16h-1zM749 551h1v17h-1zM769 568h1v13h-1zM798 551h1v17h-1zM825 568h1v13h-1zM843 551h1v17h-1zM901 568h1v13h-1zM929 568h1v16h-1zM933 568h1v16h-1zM945 568h1v13h-1zM950 568h1v13h-1zM958 568h1v13h-1zM965 568h1v13h-1zM1037 551h1v17h-1zM1040 555h1v13h-1zM1062 568h1v13h-1z"/>
<path fill="#1e46f3" d="M102 568h1v16h-1zM103 568h1v16h-1zM122 568h1v16h-1zM157 568h1v16h-1zM159 568h1v16h-1zM340 555h1v13h-1zM383 568h1v16h-1zM660 568h1v16h-1zM666 568h1v16h-1zM791 568h1v13h-1zM941 568h1v13h-1zM977 568h1v16h-1zM1019 551h1v33h-1zM1037 568h1v16h-1zM1040 568h1v13h-1z"/>
<path fill="#0d86ce" d="M102 584h1v21h-1zM123 584h1v21h-1zM135 581h1v24h-1zM158 584h1v21h-1zM204 605h1v13h-1zM308 605h1v13h-1zM412 584h1v21h-1zM456 584h1v21h-1zM502 584h1v21h-1zM558 584h1v21h-1zM560 605h1v13h-1zM619 605h1v13h-1zM666 584h1v21h-1zM679 584h1v21h-1zM793 581h1v24h-1zM794 581h1v24h-1zM818 581h1v24h-1zM829 581h1v24h-1zM899 605h1v13h-1zM920 605h1v13h-1zM995 581h1v24h-1z"/>
<path fill="#17b77d" d="M102 630h1v17h-1zM159 630h1v17h-1zM219 630h1v17h-1zM282 630h1v17h-1zM416 630h1v17h-1zM507 630h1v17h-1zM712 630h1v17h-1zM752 630h1v17h-1zM829 630h1v17h-1zM831 630h1v17h-1zM836 630h1v17h-1zM966 630h1v17h-1zM967 630h1v17h-1zM992 630h1v17h-1z"/>
<path fill="#4ace54" d="M102 647h1v17h-1zM272 647h1v17h-1zM282 647h1v17h-1zM286 647h1v17h-1zM291 647h1v17h-1zM401 647h1v17h-1zM487 647h1v17h-1zM507 647h1v17h-1zM537 647h1v17h-1zM583 647h1v17h-1zM685 647h1v17h-1zM687 647h1v17h-1zM743 647h1v17h-1zM783 647h1v17h-1zM831 647h1v17h-1zM871 647h1v17h-1zM951 647h1v17h-1zM966 647h1v17h-1zM1020 647h1v17h-1zM1022 647h1v17h-1zM1062 647h1v17h-1z"/>
<path fill="#aaec0c" d="M102 664h1v12h-1zM142 676h1v14h-1zM268 664h1v12h-1zM416 664h1v12h-1zM666 664h1v12h-1zM747 664h1v12h-1zM748 664h1v12h-1zM893 664h1v12h-1zM914 676h1v14h-1z"/>
<path fill="#d3db00" d="M102 676h1v14h-1zM231 676h1v14h-1zM398 676h1v14h-1zM749 676h1v14h-1zM799 676h1v14h-1z"/>
<path fill="#1a2ad4" d="M103 527h1v24h-1zM125 568h1v16h-1zM130 551h1v17h-1zM131 551h1v17h-1zM138 531h1v24h-1zM144 568h1v16h-1zM145 555h1v13h-1zM147 568h1v13h-1zM170 527h1v24h-1zM181 568h1v13h-1zM193 555h1v13h-1zM205 551h1v17h-1zM209 568h1v16h-1zM215 568h1v16h-1zM224 555h1v13h-1zM246 555h1v13h-1zM247 551h1v17h-1zM250 568h1v16h-1zM302 555h1v13h-1zM324 568h1v13h-1zM360 551h1v17h-1zM392 568h1v13h-1zM395 551h1v17h-1zM404 568h1v16h-1zM407 568h1v16h-1zM429 568h1v13h-1zM439 568h1v13h-1zM444 555h1v13h-1zM471 551h1v17h-1zM479 551h1v17h-1zM488 551h1v17h-1zM512 555h1v13h-1zM533 568h1v13h-1zM554 551h1v17h-1zM559 551h1v17h-1zM561 551h1v17h-1zM566 551h1v17h-1zM586 568h1v16h-1zM591 568h1v16h-1zM610 551h1v17h-1zM634 527h1v24h-1zM639 555h1v13h-1zM643 568h1v13h-1zM663 551h1v17h-1zM669 551h1v17h-1zM691 555h1v13h-1zM698 527h1v24h-1zM704 568h1v16h-1zM732 551h1v17h-1zM742 551h1v17h-1zM791 531h1v24h-1zM839 531h1v24h-1zM842 555h1v13h-1zM857 568h1v13h-1zM858 568h1v13h-1zM862 551h1v17h-1zM868 527h1v24h-1zM870 551h1v17h-1zM909 555h1v13h-1zM913 568h1v13h-1zM922 551h1v17h-1zM927 551h1v17h-1zM941 531h1v24h-1zM956 555h1v13h-1zM958 531h1v24h-1zM959 531h1v24h-1zM961 555h1v13h-1zM967 551h1v17h-1zM969 551h1v17h-1zM973 551h1v17h-1zM976 551h1v17h-1zM986 555h1v13h-1zM987 555h1v13h-1zM988 555h1v13h-1zM992 531h1v24h-1zM1006 568h1v13h-1zM1018 568h1v16h-1zM1029 568h1v16h-1zM1030 568h1v16h-1zM1035 568h1v13h-1zM1037 527h1v24h-1zM1080 568h1v16h-1z"/>
<path fill="#0f82d4" d="M103 584h1v21h-1zM122 584h1v21h-1zM139 605h1v13h-1zM157 584h1v21h-1zM159 584h1v21h-1zM172 584h1v21h-1zM265 581h1v24h-1zM421 581h1v24h-1zM482 605h1v13h-1zM512 581h1v24h-1zM551 584h1v21h-1zM556 584h1v21h-1zM660 584h1v21h-1zM701 584h1v21h-1zM708 605h1v13h-1zM874 605h1v13h-1zM895 605h1v13h-1zM900 581h1v24h-1zM933 584h1v21h-1zM1020 584h1v21h-1zM1030 605h1v13h-1z"/>
<path fill="#181cc4" d="M104 527h1v24h-1zM134 555h1v13h-1zM136 555h1v13h-1zM137 531h1v24h-1zM145 531h1v24h-1zM156 568h1v16h-1zM166 551h1v17h-1zM174 555h1v13h-1zM189 555h1v13h-1zM204 551h1v17h-1zM215 551h1v17h-1zM239 555h1v13h-1zM247 527h1v24h-1zM270 531h1v24h-1zM300 531h1v24h-1zM301 531h1v24h-1zM310 531h1v24h-1zM333 527h1v24h-1zM345 551h1v17h-1zM358 531h1v24h-1zM371 551h1v17h-1zM381 568h1v16h-1zM383 527h1v24h-1zM388 531h1v24h-1zM390 531h1v24h-1zM392 555h1v13h-1zM420 555h1v13h-1zM424 551h1v17h-1zM425 551h1v17h-1zM432 531h1v24h-1zM443 531h1v24h-1zM467 551h1v17h-1zM475 568h1v16h-1zM477 527h1v24h-1zM483 551h1v17h-1zM489 568h1v16h-1zM525 555h1v13h-1zM543 551h1v17h-1zM566 527h1v24h-1zM611 551h1v17h-1zM615 527h1v24h-1zM621 568h1v16h-1zM632 568h1v13h-1zM667 568h1v16h-1zM676 531h1v24h-1zM681 551h1v17h-1zM708 568h1v16h-1zM715 527h1v24h-1zM716 527h1v24h-1zM717 551h1v17h-1zM727 527h1v24h-1zM728 551h1v17h-1zM733 551h1v17h-1zM755 551h1v17h-1zM776 555h1v13h-1zM789 531h1v24h-1zM802 555h1v13h-1zM814 551h1v17h-1zM824 555h1v13h-1zM830 555h1v13h-1zM863 551h1v17h-1zM889 568h1v13h-1zM890 555h1v13h-1zM933 527h1v24h-1zM953 555h1v13h-1zM966 527h1v24h-1zM975 551h1v17h-1zM976 527h1v24h-1zM1004 555h1v13h-1zM1005 555h1v13h-1zM1018 551h1v17h-1zM1032 551h1v17h-1zM1057 531h1v24h-1z"/>
<path fill="#1212ac" d="M105 531h1v24h-1zM129 527h1v24h-1zM143 527h1v24h-1zM162 527h1v24h-1zM215 527h1v24h-1zM415 551h1v17h-1zM464 527h1v24h-1zM465 551h1v17h-1zM510 531h1v24h-1zM525 531h1v24h-1zM533 531h1v24h-1zM584 531h1v24h-1zM590 527h1v24h-1zM592 527h1v24h-1zM619 551h1v17h-1zM620 527h1v24h-1zM632 555h1v13h-1zM717 527h1v24h-1zM720 527h1v24h-1zM734 551h1v17h-1zM854 531h1v24h-1zM876 551h1v17h-1zM882 527h1v24h-1zM886 527h1v24h-1zM948 531h1v24h-1zM953 531h1v24h-1zM968 527h1v24h-1zM975 527h1v24h-1zM1018 527h1v24h-1zM1034 531h1v24h-1z"/>
<path fill="#191fc8" d="M105 555h1v13h-1zM115 531h1v24h-1zM117 551h1v17h-1zM143 551h1v17h-1zM153 568h1v16h-1zM188 531h1v24h-1zM212 527h1v24h-1zM228 531h1v24h-1zM248 527h1v24h-1zM267 531h1v24h-1zM298 531h1v24h-1zM351 551h1v17h-1zM354 555h1v13h-1zM363 551h1v17h-1zM445 555h1v13h-1zM463 568h1v16h-1zM465 568h1v16h-1zM466 527h1v24h-1zM486 551h1v17h-1zM507 531h1v24h-1zM523 531h1v24h-1zM533 555h1v13h-1zM538 551h1v17h-1zM542 551h1v17h-1zM544 551h1v17h-1zM556 527h1v24h-1zM564 551h1v17h-1zM570 551h1v17h-1zM585 555h1v13h-1zM587 551h1v17h-1zM599 527h1v24h-1zM613 551h1v17h-1zM617 568h1v16h-1zM619 568h1v16h-1zM620 551h1v17h-1zM624 527h1v24h-1zM643 555h1v13h-1zM662 568h1v16h-1zM664 551h1v17h-1zM716 551h1v17h-1zM721 568h1v16h-1zM741 527h1v24h-1zM745 551h1v17h-1zM803 551h1v17h-1zM813 551h1v17h-1zM821 555h1v13h-1zM825 531h1v24h-1zM840 555h1v13h-1zM887 568h1v13h-1zM896 555h1v13h-1zM924 551h1v17h-1zM972 527h1v24h-1zM998 555h1v13h-1zM1010 531h1v24h-1zM1012 531h1v24h-1zM1023 551h1v17h-1zM1045 568h1v16h-1zM1054 527h1v24h-1z"/>
<path fill="#1376e0" d="M105 581h1v24h-1zM127 584h1v21h-1zM128 584h1v21h-1zM129 584h1v21h-1zM173 584h1v21h-1zM191 581h1v24h-1zM267 581h1v24h-1zM287 584h1v21h-1zM324 581h1v24h-1zM444 581h1v24h-1zM494 584h1v21h-1zM732 584h1v21h-1zM862 584h1v21h-1zM899 581h1v24h-1zM927 584h1v21h-1zM964 581h1v24h-1zM974 584h1v21h-1zM1027 584h1v21h-1z"/>
<path fill="#0e84d1" d="M106 605h1v13h-1zM149 584h1v21h-1zM228 581h1v24h-1zM309 605h1v13h-1zM316 605h1v13h-1zM370 605h1v13h-1zM383 584h1v21h-1zM465 605h1v13h-1zM565 584h1v21h-1zM607 584h1v21h-1zM663 584h1v21h-1zM667 605h1v13h-1zM672 581h1v24h-1zM721 605h1v13h-1zM729 605h1v13h-1zM739 584h1v21h-1zM786 581h1v24h-1zM825 581h1v24h-1zM901 581h1v24h-1zM928 584h1v21h-1zM932 584h1v21h-1zM1022 584h1v21h-1zM1075 605h1v13h-1z"/>
<path fill="#0c88ca" d="M107 605h1v13h-1zM121 584h1v21h-1zM142 605h1v13h-1zM180 605h1v13h-1zM237 618h1v12h-1zM250 605h1v13h-1zM287 605h1v13h-1zM304 605h1v13h-1zM311 584h1v21h-1zM379 605h1v13h-1zM457 618h1v12h-1zM458 581h1v24h-1zM534 605h1v13h-1zM621 605h1v13h-1zM801 605h1v13h-1zM843 584h1v21h-1zM941 581h1v24h-1zM943 605h1v13h-1zM962 605h1v13h-1zM993 605h1v13h-1zM1054 584h1v21h-1z"/>
<path fill="#1f49f7" d="M108 568h1v13h-1zM123 568h1v16h-1zM135 568h1v13h-1zM138 568h1v13h-1zM311 568h1v16h-1zM458 568h1v13h-1zM739 568h1v16h-1zM959 568h1v13h-1zM1054 568h1v16h-1zM1056 568h1v13h-1z"/>
<path fill="#19b97b" d="M108 630h1v17h-1zM121 630h1v17h-1zM357 630h1v17h-1zM413 647h1v17h-1zM432 630h1v17h-1zM458 630h1v17h-1zM537 630h1v17h-1zM667 647h1v17h-1zM841 630h1v17h-1z"/>
<path fill="#56d24c" d="M108 647h1v17h-1zM145 647h1v17h-1zM158 647h1v17h-1zM159 647h1v17h-1zM414 647h1v17h-1zM432 647h1v17h-1zM540 647h1v17h-1zM725 647h1v17h-1zM786 647h1v17h-1zM825 647h1v17h-1zM917 647h1v17h-1zM992 647h1v17h-1zM1041 647h1v17h-1zM1054 647h1v17h-1z"/>
<path fill="#019ea4" d="M110 618h1v12h-1zM118 618h1v12h-1zM127 618h1v12h-1zM177 618h1v12h-1zM214 618h1v12h-1zM312 618h1v12h-1zM332 618h1v12h-1zM341 618h1v12h-1zM480 618h1v12h-1zM559 618h1v12h-1zM575 618h1v12h-1zM639 618h1v12h-1zM645 618h1v12h-1zM651 605h1v13h-1zM666 605h1v13h-1zM690 618h1v12h-1zM715 618h1v12h-1zM732 618h1v12h-1zM754 618h1v12h-1zM780 618h1v12h-1zM789 618h1v12h-1zM827 605h1v13h-1zM907 618h1v12h-1zM918 618h1v12h-1zM944 618h1v12h-1zM966 618h1v12h-1zM975 618h1v12h-1zM1024 618h1v12h-1zM1051 618h1v12h-1zM1074 618h1v12h-1z"/>
<path fill="#00a0a0" d="M111 618h1v12h-1zM123 605h1v13h-1zM125 618h1v12h-1zM200 605h1v13h-1zM311 605h1v13h-1zM358 618h1v12h-1zM519 618h1v12h-1zM582 618h1v12h-1zM614 618h1v12h-1zM777 618h1v12h-1zM806 618h1v12h-1zM883 618h1v12h-1zM922 618h1v12h-1zM935 618h1v12h-1zM995 618h1v12h-1zM1020 618h1v12h-1zM1021 618h1v12h-1zM1038 618h1v12h-1z"/>
<path fill="#01a19e" d="M112 618h1v12h-1zM121 618h1v12h-1zM158 618h1v12h-1zM248 618h1v12h-1zM256 605h1v13h-1zM457 630h1v17h-1zM653 618h1v12h-1zM731 618h1v12h-1zM792 618h1v12h-1zM816 618h1v12h-1zM829 618h1v12h-1zM967 618h1v12h-1zM1022 618h1v12h-1zM1054 618h1v12h-1zM1073 618h1v12h-1z"/>
<path fill="#1515b6" d="M113 531h1v24h-1zM114 531h1v24h-1zM161 551h1v17h-1zM163 527h1v24h-1zM175 531h1v24h-1zM198 555h1v13h-1zM238 568h1v13h-1zM239 531h1v24h-1zM249 527h1v24h-1zM257 527h1v24h-1zM274 531h1v24h-1zM329 527h1v24h-1zM341 531h1v24h-1zM342 531h1v24h-1zM360 527h1v24h-1zM364 551h1v17h-1zM389 531h1v24h-1zM461 527h1v24h-1zM463 551h1v17h-1zM472 527h1v24h-1zM480 527h1v24h-1zM481 527h1v24h-1zM490 527h1v24h-1zM503 527h1v24h-1zM522 555h1v13h-1zM524 531h1v24h-1zM542 527h1v24h-1zM593 527h1v24h-1zM594 531h1v24h-1zM621 551h1v17h-1zM675 531h1v24h-1zM693 531h1v24h-1zM707 527h1v24h-1zM733 527h1v24h-1zM745 527h1v24h-1zM754 527h1v24h-1zM759 531h1v24h-1zM782 555h1v13h-1zM812 527h1v24h-1zM846 527h1v24h-1zM848 527h1v24h-1zM869 527h1v24h-1zM870 527h1v24h-1zM873 527h1v24h-1zM883 527h1v24h-1zM909 531h1v24h-1zM925 527h1v24h-1zM968 551h1v17h-1zM980 527h1v24h-1zM983 527h1v24h-1zM996 531h1v24h-1zM1027 527h1v24h-1zM1035 555h1v13h-1zM1079 527h1v24h-1z"/>
<path fill="#1572e3" d="M113 581h1v24h-1zM140 581h1v24h-1zM141 584h1v21h-1zM161 584h1v21h-1zM195 581h1v24h-1zM250 584h1v21h-1zM303 581h1v24h-1zM315 584h1v21h-1zM445 581h1v24h-1zM461 584h1v21h-1zM510 581h1v24h-1zM570 584h1v21h-1zM575 581h1v24h-1zM601 584h1v21h-1zM622 584h1v21h-1zM633 584h1v21h-1zM704 584h1v21h-1zM721 584h1v21h-1zM760 581h1v24h-1zM806 584h1v21h-1zM809 605h1v13h-1zM858 581h1v24h-1zM920 581h1v24h-1zM990 581h1v24h-1zM1018 584h1v21h-1zM1076 584h1v21h-1z"/>
<path fill="#1c30dc" d="M115 555h1v13h-1zM127 568h1v16h-1zM177 568h1v13h-1zM179 568h1v13h-1zM183 568h1v13h-1zM188 555h1v13h-1zM195 555h1v13h-1zM227 555h1v13h-1zM229 555h1v13h-1zM233 568h1v13h-1zM248 551h1v17h-1zM257 568h1v16h-1zM270 568h1v13h-1zM274 568h1v13h-1zM321 555h1v13h-1zM382 551h1v17h-1zM383 551h1v17h-1zM395 568h1v16h-1zM420 568h1v13h-1zM432 555h1v13h-1zM446 555h1v13h-1zM485 527h1v24h-1zM515 555h1v13h-1zM523 555h1v13h-1zM526 555h1v13h-1zM537 551h1v17h-1zM559 568h1v16h-1zM589 527h1v24h-1zM611 568h1v16h-1zM626 551h1v17h-1zM654 568h1v13h-1zM681 568h1v16h-1zM736 551h1v17h-1zM757 568h1v16h-1zM759 568h1v13h-1zM789 568h1v13h-1zM802 568h1v13h-1zM821 568h1v13h-1zM864 568h1v16h-1zM873 568h1v16h-1zM897 568h1v13h-1zM951 555h1v13h-1zM952 555h1v13h-1zM956 568h1v13h-1zM982 551h1v17h-1zM1002 568h1v13h-1zM1015 555h1v13h-1zM1062 555h1v13h-1zM102 520h1v13h-1zM138 520h1v13h-1zM236 514h1v13h-1zM421 520h1v13h-1zM433 518h1v13h-1zM451 514h1v13h-1zM495 520h1v13h-1zM514 514h1v13h-1zM555 520h1v13h-1zM657 520h1v13h-1zM734 514h1v13h-1zM865 518h1v13h-1zM916 520h1v13h-1zM935 520h1v13h-1zM957 514h1v13h-1zM970 520h1v13h-1z"/>
<path fill="#166fe6" d="M116 581h1v24h-1zM125 584h1v21h-1zM134 581h1v24h-1zM153 584h1v21h-1zM204 584h1v21h-1zM313 584h1v21h-1zM316 584h1v21h-1zM420 581h1v24h-1zM463 584h1v21h-1zM534 581h1v24h-1zM611 584h1v21h-1zM690 581h1v24h-1zM714 584h1v21h-1zM780 581h1v24h-1zM790 581h1v24h-1zM851 584h1v21h-1zM857 581h1v24h-1zM863 584h1v21h-1zM873 584h1v21h-1zM953 581h1v24h-1zM954 581h1v24h-1z"/>
<path fill="#1279de" d="M118 584h1v21h-1zM126 584h1v21h-1zM160 584h1v21h-1zM205 584h1v21h-1zM221 605h1v13h-1zM260 605h1v13h-1zM262 584h1v21h-1zM270 581h1v24h-1zM293 584h1v21h-1zM314 584h1v21h-1zM371 584h1v21h-1zM403 584h1v21h-1zM408 584h1v21h-1zM454 581h1v24h-1zM476 584h1v21h-1zM487 584h1v21h-1zM526 581h1v24h-1zM568 584h1v21h-1zM613 584h1v21h-1zM677 581h1v24h-1zM788 581h1v24h-1zM789 581h1v24h-1zM834 581h1v24h-1zM855 581h1v24h-1zM902 581h1v24h-1zM944 581h1v24h-1zM950 581h1v24h-1zM976 584h1v21h-1zM989 581h1v24h-1zM1021 584h1v21h-1zM1034 581h1v24h-1z"/>
<path fill="#0596b2" d="M118 605h1v13h-1zM157 605h1v13h-1zM158 605h1v13h-1zM215 618h1v12h-1zM266 618h1v12h-1zM320 605h1v13h-1zM379 618h1v12h-1zM397 618h1v12h-1zM404 618h1v12h-1zM444 605h1v13h-1zM470 618h1v12h-1zM482 618h1v12h-1zM497 605h1v13h-1zM526 605h1v13h-1zM536 618h1v12h-1zM550 618h1v12h-1zM556 605h1v13h-1zM560 618h1v12h-1zM617 618h1v12h-1zM652 618h1v12h-1zM818 605h1v13h-1zM829 605h1v13h-1zM911 605h1v13h-1z"/>
<path fill="#1d3be7" d="M119 568h1v16h-1zM121 551h1v17h-1zM145 568h1v13h-1zM149 568h1v16h-1zM172 568h1v16h-1zM191 568h1v13h-1zM195 568h1v13h-1zM196 568h1v13h-1zM207 568h1v16h-1zM222 551h1v17h-1zM229 568h1v13h-1zM265 568h1v13h-1zM298 568h1v13h-1zM302 568h1v13h-1zM317 568h1v13h-1zM347 568h1v16h-1zM459 568h1v16h-1zM490 568h1v16h-1zM507 555h1v13h-1zM518 555h1v13h-1zM565 568h1v16h-1zM576 568h1v13h-1zM605 551h1v17h-1zM672 568h1v13h-1zM677 568h1v13h-1zM684 568h1v16h-1zM723 551h1v17h-1zM738 551h1v17h-1zM758 568h1v16h-1zM791 555h1v13h-1zM928 568h1v16h-1zM932 568h1v16h-1zM947 568h1v13h-1zM961 568h1v13h-1zM973 568h1v16h-1z"/>
<path fill="#204cfb" d="M121 568h1v16h-1zM323 568h1v13h-1zM507 568h1v13h-1zM511 568h1v13h-1zM651 568h1v13h-1zM723 568h1v16h-1z"/>
<path fill="#0498ae" d="M121 605h1v13h-1zM229 605h1v13h-1zM248 605h1v13h-1zM324 618h1v12h-1zM428 618h1v12h-1zM433 605h1v13h-1zM458 605h1v13h-1zM459 605h1v13h-1zM485 605h1v13h-1zM643 618h1v12h-1zM701 605h1v13h-1zM708 618h1v12h-1zM721 618h1v12h-1zM747 605h1v13h-1zM748 605h1v13h-1zM756 618h1v12h-1zM794 605h1v13h-1zM798 605h1v13h-1zM889 618h1v12h-1zM933 605h1v13h-1zM936 618h1v12h-1zM1006 618h1v12h-1zM1053 605h1v13h-1z"/>
<path fill="#2050ff" d="M124 568h1v16h-1zM340 568h1v13h-1zM373 568h1v16h-1zM518 568h1v13h-1zM843 568h1v16h-1z"/>
<path fill="#098ec0" d="M124 584h1v21h-1zM131 605h1v13h-1zM155 605h1v13h-1zM220 618h1v12h-1zM238 618h1v12h-1zM454 605h1v13h-1zM486 605h1v13h-1zM611 605h1v13h-1zM619 618h1v12h-1zM668 605h1v13h-1zM669 605h1v13h-1zM732 605h1v13h-1zM750 605h1v13h-1zM755 605h1v13h-1zM873 605h1v13h-1zM964 605h1v13h-1z"/>
<path fill="#029ca7" d="M124 605h1v13h-1zM126 618h1v12h-1zM180 618h1v12h-1zM201 605h1v13h-1zM241 618h1v12h-1zM243 618h1v12h-1zM287 618h1v12h-1zM344 618h1v12h-1zM360 618h1v12h-1zM576 618h1v12h-1zM581 618h1v12h-1zM681 618h1v12h-1zM704 618h1v12h-1zM786 605h1v13h-1zM788 618h1v12h-1zM865 618h1v12h-1zM899 618h1v12h-1zM927 618h1v12h-1zM942 618h1v12h-1zM962 618h1v12h-1zM993 618h1v12h-1zM994 618h1v12h-1z"/>
<path fill="#13b384" d="M125 630h1v17h-1zM126 630h1v17h-1zM127 630h1v17h-1zM332 630h1v17h-1zM435 630h1v17h-1zM487 630h1v17h-1zM581 630h1v17h-1zM613 630h1v17h-1zM821 630h1v17h-1zM927 630h1v17h-1zM950 630h1v17h-1zM951 630h1v17h-1zM1005 630h1v17h-1zM1017 630h1v17h-1zM1077 630h1v17h-1z"/>
<path fill="#1c38e3" d="M126 568h1v16h-1zM132 568h1v13h-1zM135 555h1v13h-1zM158 568h1v16h-1zM197 568h1v13h-1zM203 568h1v16h-1zM226 551h1v17h-1zM228 555h1v13h-1zM267 568h1v13h-1zM290 568h1v16h-1zM303 568h1v13h-1zM354 568h1v13h-1zM357 555h1v13h-1zM358 555h1v13h-1zM374 551h1v17h-1zM401 568h1v13h-1zM422 568h1v13h-1zM454 568h1v13h-1zM473 568h1v16h-1zM476 568h1v16h-1zM485 551h1v17h-1zM513 568h1v13h-1zM516 555h1v13h-1zM519 568h1v13h-1zM523 568h1v13h-1zM561 568h1v16h-1zM572 551h1v33h-1zM607 568h1v16h-1zM610 568h1v16h-1zM627 568h1v13h-1zM631 555h1v13h-1zM650 568h1v13h-1zM687 568h1v16h-1zM722 568h1v16h-1zM723 527h1v24h-1zM726 551h1v17h-1zM732 568h1v16h-1zM756 568h1v16h-1zM799 551h1v17h-1zM824 568h1v13h-1zM825 555h1v13h-1zM829 568h1v13h-1zM834 568h1v13h-1zM851 568h1v16h-1zM862 568h1v16h-1zM927 568h1v16h-1zM928 551h1v17h-1zM935 568h1v13h-1zM936 568h1v13h-1zM960 568h1v13h-1zM976 568h1v16h-1zM990 568h1v13h-1zM998 568h1v13h-1zM1015 568h1v13h-1zM1024 568h1v16h-1zM1032 568h1v16h-1zM1036 551h1v17h-1z"/>
<path fill="#1616bb" d="M128 527h1v24h-1zM146 555h1v13h-1zM185 555h1v13h-1zM186 555h1v13h-1zM193 531h1v24h-1zM199 555h1v13h-1zM277 531h1v24h-1zM325 555h1v13h-1zM367 527h1v24h-1zM371 527h1v24h-1zM415 568h1v16h-1zM423 531h1v24h-1zM431 531h1v24h-1zM454 531h1v24h-1zM475 551h1v17h-1zM486 527h1v24h-1zM494 527h1v24h-1zM528 531h1v24h-1zM544 527h1v24h-1zM562 527h1v24h-1zM574 531h1v24h-1zM591 551h1v17h-1zM609 527h1v24h-1zM622 551h1v17h-1zM642 555h1v13h-1zM672 531h1v24h-1zM677 531h1v24h-1zM678 551h1v17h-1zM691 531h1v24h-1zM788 531h1v24h-1zM800 568h1v16h-1zM801 555h1v13h-1zM849 527h1v24h-1zM878 551h1v17h-1zM914 555h1v13h-1zM954 555h1v13h-1zM982 527h1v24h-1zM1003 531h1v24h-1zM1008 531h1v24h-1zM1031 527h1v24h-1zM1036 527h1v24h-1zM1050 551h1v17h-1zM1064 555h1v13h-1zM1077 527h1v24h-1z"/>
<path fill="#0890bc" d="M130 605h1v13h-1zM137 605h1v13h-1zM191 605h1v13h-1zM195 605h1v13h-1zM210 605h1v13h-1zM242 605h1v13h-1zM262 605h1v13h-1zM289 605h1v13h-1zM332 605h1v13h-1zM341 605h1v13h-1zM342 605h1v13h-1zM351 605h1v13h-1zM360 605h1v13h-1zM424 605h1v13h-1zM425 605h1v13h-1zM461 605h1v13h-1zM559 605h1v13h-1zM633 605h1v13h-1zM731 605h1v13h-1zM753 605h1v13h-1zM789 605h1v13h-1zM895 618h1v12h-1zM935 605h1v13h-1zM944 605h1v13h-1zM956 605h1v13h-1zM1006 605h1v13h-1zM1021 605h1v13h-1zM1051 605h1v13h-1z"/>
<path fill="#117ddb" d="M132 581h1v24h-1zM192 581h1v24h-1zM197 581h1v24h-1zM294 581h1v24h-1zM302 581h1v24h-1zM344 584h1v21h-1zM376 584h1v21h-1zM418 581h1v24h-1zM433 581h1v24h-1zM457 605h1v13h-1zM538 584h1v21h-1zM566 584h1v21h-1zM787 605h1v13h-1zM821 581h1v24h-1zM831 581h1v24h-1zM842 581h1v24h-1zM845 584h1v21h-1zM951 581h1v24h-1zM965 581h1v24h-1zM1029 584h1v21h-1zM1055 584h1v21h-1z"/>
<path fill="#0b0b93" d="M133 531h1v24h-1zM186 531h1v24h-1zM220 531h1v24h-1zM258 527h1v24h-1zM809 527h1v24h-1z"/>
<path fill="#9ce818" d="M137 664h1v12h-1zM155 664h1v12h-1zM188 664h1v12h-1zM226 664h1v12h-1zM310 664h1v12h-1zM331 664h1v12h-1zM352 664h1v12h-1zM537 664h1v12h-1zM812 664h1v12h-1zM892 664h1v12h-1zM1031 664h1v12h-1zM1048 676h1v14h-1zM1064 676h1v14h-1zM1077 664h1v12h-1z"/>
<path fill="#0694b5" d="M139 618h1v12h-1zM142 618h1v12h-1zM172 605h1v13h-1zM192 605h1v13h-1zM351 618h1v12h-1zM364 618h1v12h-1zM432 605h1v13h-1zM519 605h1v13h-1zM558 605h1v13h-1zM624 605h1v13h-1zM743 605h1v13h-1zM770 605h1v13h-1zM777 605h1v13h-1zM831 605h1v13h-1zM855 605h1v13h-1zM995 605h1v13h-1zM1020 605h1v13h-1zM1075 618h1v12h-1zM1076 618h1v12h-1z"/>
<path fill="#0aaa91" d="M139 630h1v17h-1zM611 630h1v17h-1zM721 630h1v17h-1zM801 630h1v17h-1z"/>
<path fill="#20c070" d="M139 647h1v17h-1zM213 647h1v17h-1zM483 647h1v17h-1zM536 647h1v17h-1zM550 647h1v17h-1zM622 647h1v17h-1zM636 647h1v17h-1zM914 647h1v17h-1zM975 647h1v17h-1zM981 647h1v17h-1z"/>
<path fill="#7ade34" d="M139 664h1v12h-1zM356 664h1v12h-1zM392 664h1v12h-1zM536 664h1v12h-1zM541 664h1v12h-1zM729 664h1v12h-1z"/>
<path fill="#1818c0" d="M140 555h1v13h-1zM141 551h1v17h-1zM150 551h1v17h-1zM172 527h1v24h-1zM176 531h1v24h-1zM178 531h1v24h-1zM187 555h1v13h-1zM195 531h1v24h-1zM197 531h1v24h-1zM207 527h1v24h-1zM223 531h1v24h-1zM224 531h1v24h-1zM252 527h1v24h-1zM282 531h1v24h-1zM308 568h1v13h-1zM316 551h1v17h-1zM436 531h1v24h-1zM468 551h1v17h-1zM503 551h1v17h-1zM504 531h1v24h-1zM514 531h1v24h-1zM623 527h1v24h-1zM650 531h1v24h-1zM663 527h1v24h-1zM674 531h1v24h-1zM694 531h1v24h-1zM729 551h1v17h-1zM740 527h1v24h-1zM751 527h1v24h-1zM753 527h1v24h-1zM774 531h1v24h-1zM842 531h1v24h-1zM847 527h1v24h-1zM894 531h1v24h-1zM915 555h1v26h-1zM922 527h1v24h-1zM927 527h1v24h-1zM938 531h1v24h-1zM949 531h1v24h-1zM957 555h1v13h-1zM988 531h1v24h-1zM991 531h1v24h-1zM995 531h1v24h-1zM996 555h1v13h-1zM998 531h1v24h-1zM1023 527h1v24h-1zM1039 531h1v24h-1zM1044 551h1v17h-1zM1049 527h1v24h-1zM1065 551h1v17h-1zM1079 551h1v17h-1z"/>
<path fill="#07a795" d="M142 630h1v17h-1zM221 630h1v17h-1zM416 618h1v12h-1zM651 618h1v12h-1zM748 618h1v12h-1zM827 618h1v12h-1zM895 630h1v17h-1z"/>
<path fill="#32c664" d="M143 647h1v17h-1zM155 647h1v17h-1zM182 647h1v17h-1zM189 647h1v17h-1zM248 647h1v17h-1zM290 647h1v17h-1zM428 647h1v17h-1zM545 647h1v17h-1zM606 647h1v17h-1zM629 647h1v17h-1zM645 647h1v17h-1zM750 647h1v17h-1zM879 647h1v17h-1zM948 647h1v17h-1zM1005 647h1v17h-1zM1008 647h1v17h-1zM1017 647h1v17h-1zM1038 647h1v17h-1z"/>
<path fill="#89e328" d="M143 664h1v12h-1zM183 664h1v12h-1zM202 664h1v12h-1zM239 664h1v12h-1zM344 664h1v12h-1zM346 664h1v12h-1zM360 664h1v12h-1zM582 664h1v12h-1zM750 664h1v12h-1zM759 664h1v12h-1z"/>
<path fill="#bfeb00" d="M143 676h1v14h-1zM144 676h1v14h-1zM177 676h1v14h-1zM298 676h1v14h-1zM360 676h1v14h-1zM428 676h1v14h-1zM472 676h1v14h-1zM509 676h1v14h-1zM616 676h1v14h-1zM671 676h1v14h-1zM716 676h1v14h-1zM744 676h1v14h-1zM882 676h1v14h-1zM904 676h1v14h-1zM927 676h1v14h-1zM970 676h1v14h-1zM980 676h1v14h-1zM998 676h1v14h-1z"/>
<path fill="#2cc468" d="M144 647h1v17h-1zM152 647h1v17h-1zM287 647h1v17h-1zM337 647h1v17h-1zM424 647h1v17h-1zM429 647h1v17h-1zM470 647h1v17h-1zM480 647h1v17h-1zM570 647h1v17h-1zM575 647h1v17h-1zM625 647h1v17h-1zM804 647h1v17h-1zM817 647h1v17h-1zM823 647h1v17h-1zM927 647h1v17h-1zM935 647h1v17h-1zM980 647h1v17h-1zM998 647h1v17h-1zM1004 647h1v17h-1z"/>
<path fill="#8ee424" d="M144 664h1v12h-1zM189 664h1v12h-1zM289 664h1v12h-1zM337 664h1v12h-1zM354 664h1v12h-1zM411 664h1v12h-1zM430 664h1v12h-1zM552 664h1v12h-1zM581 664h1v12h-1zM599 664h1v12h-1zM606 664h1v12h-1zM629 664h1v12h-1zM673 664h1v12h-1zM689 664h1v12h-1zM904 664h1v12h-1zM914 664h1v12h-1zM970 664h1v12h-1zM1043 664h1v12h-1zM1067 664h1v12h-1z"/>
<path fill="#14b481" d="M145 630h1v17h-1zM158 630h1v17h-1zM172 630h1v17h-1zM178 630h1v17h-1zM268 630h1v17h-1zM271 630h1v17h-1zM317 630h1v17h-1zM358 630h1v17h-1zM386 630h1v17h-1zM469 630h1v17h-1zM519 630h1v17h-1zM715 630h1v17h-1zM783 630h1v17h-1zM792 630h1v17h-1zM816 630h1v17h-1zM1008 630h1v17h-1zM1022 630h1v17h-1zM1031 630h1v17h-1z"/>
<path fill="#1cbc77" d="M151 647h1v17h-1zM220 647h1v17h-1zM245 630h1v17h-1zM485 630h1v17h-1z"/>
<path fill="#0dad8c" d="M152 630h1v17h-1zM160 630h1v17h-1zM183 630h1v17h-1zM239 630h1v17h-1zM256 618h1v12h-1zM262 630h1v17h-1zM314 630h1v17h-1zM315 630h1v17h-1zM429 630h1v17h-1zM471 630h1v17h-1zM575 630h1v17h-1zM639 630h1v17h-1zM732 630h1v17h-1zM753 630h1v17h-1zM754 630h1v17h-1zM819 630h1v17h-1zM899 630h1v17h-1zM924 630h1v17h-1zM936 630h1v17h-1zM975 630h1v17h-1zM1004 630h1v17h-1zM1051 630h1v17h-1zM1075 630h1v17h-1z"/>
<path fill="#0e0e9d" d="M153 527h1v24h-1zM173 527h1v24h-1zM204 527h1v24h-1zM221 531h1v24h-1zM392 531h1v24h-1zM617 527h1v24h-1zM619 527h1v24h-1zM621 527h1v24h-1zM642 531h1v24h-1zM708 527h1v24h-1z"/>
<path fill="#1080d8" d="M155 584h1v21h-1zM156 605h1v13h-1zM177 581h1v24h-1zM212 584h1v21h-1zM220 605h1v13h-1zM401 581h1v24h-1zM475 605h1v13h-1zM479 584h1v21h-1zM559 584h1v21h-1zM587 584h1v21h-1zM610 584h1v21h-1zM743 584h1v21h-1zM777 581h1v24h-1zM778 581h1v24h-1zM797 584h1v21h-1zM889 605h1v13h-1zM956 581h1v24h-1zM973 584h1v21h-1zM1008 581h1v24h-1zM1024 584h1v21h-1z"/>
<path fill="#039aaa" d="M155 618h1v12h-1zM159 605h1v13h-1zM195 618h1v12h-1zM213 618h1v12h-1zM228 605h1v13h-1zM242 618h1v12h-1zM262 618h1v12h-1zM333 605h1v13h-1zM421 605h1v13h-1zM429 618h1v12h-1zM454 618h1v12h-1zM611 618h1v12h-1zM613 618h1v12h-1zM622 618h1v12h-1zM657 605h1v13h-1zM739 605h1v13h-1zM753 618h1v12h-1zM755 618h1v12h-1zM793 605h1v13h-1zM873 618h1v12h-1zM956 618h1v12h-1zM964 618h1v12h-1zM976 618h1v12h-1zM1004 618h1v12h-1zM1005 618h1v12h-1zM1008 618h1v12h-1zM1052 605h1v13h-1z"/>
<path fill="#16b67f" d="M155 630h1v17h-1zM240 630h1v17h-1zM272 630h1v17h-1zM405 630h1v17h-1zM599 630h1v17h-1zM623 630h1v17h-1zM789 630h1v17h-1zM795 630h1v17h-1zM911 630h1v17h-1zM917 630h1v17h-1zM1036 630h1v17h-1zM1054 630h1v17h-1z"/>
<path fill="#c5e500" d="M155 676h1v14h-1zM257 676h1v14h-1zM270 676h1v14h-1zM299 676h1v14h-1zM559 676h1v14h-1zM626 676h1v14h-1zM783 676h1v14h-1zM816 676h1v14h-1zM822 676h1v14h-1zM837 676h1v14h-1zM922 676h1v14h-1zM951 676h1v14h-1z"/>
<path fill="#0a8cc3" d="M156 618h1v12h-1zM160 605h1v13h-1zM205 605h1v13h-1zM241 605h1v13h-1zM243 605h1v13h-1zM326 605h1v13h-1zM428 605h1v13h-1zM429 605h1v13h-1zM564 605h1v13h-1zM574 605h1v13h-1zM601 605h1v13h-1zM622 605h1v13h-1zM643 605h1v13h-1zM651 581h1v24h-1zM771 605h1v13h-1zM772 605h1v13h-1zM806 605h1v13h-1zM990 605h1v13h-1zM1005 605h1v13h-1zM1024 605h1v13h-1z"/>
<path fill="#04a499" d="M159 618h1v12h-1zM228 618h1v12h-1zM245 618h1v12h-1zM283 630h1v17h-1zM284 630h1v17h-1zM405 618h1v12h-1zM421 618h1v12h-1zM458 618h1v12h-1zM711 618h1v12h-1zM786 618h1v12h-1zM911 618h1v12h-1z"/>
<path fill="#85e12c" d="M160 664h1v12h-1zM345 664h1v12h-1zM429 664h1v12h-1zM483 664h1v12h-1zM494 664h1v12h-1zM510 664h1v12h-1zM585 664h1v12h-1zM693 664h1v12h-1zM817 664h1v12h-1zM998 664h1v12h-1zM1038 664h1v12h-1z"/>
<path fill="#c2e800" d="M162 676h1v14h-1zM240 676h1v14h-1zM241 676h1v14h-1zM282 676h1v14h-1zM353 676h1v14h-1zM387 676h1v14h-1zM388 676h1v14h-1zM443 676h1v14h-1zM599 676h1v14h-1zM629 676h1v14h-1zM763 676h1v14h-1zM769 676h1v14h-1zM812 676h1v14h-1zM831 676h1v14h-1zM966 676h1v14h-1z"/>
<path fill="#10b088" d="M163 630h1v17h-1zM214 630h1v17h-1zM360 630h1v17h-1zM428 630h1v17h-1zM452 630h1v17h-1zM553 630h1v17h-1zM624 630h1v17h-1zM636 630h1v17h-1zM643 630h1v17h-1zM681 630h1v17h-1zM690 630h1v17h-1zM817 630h1v17h-1zM871 630h1v17h-1z"/>
<path fill="#26c26c" d="M163 647h1v17h-1zM183 647h1v17h-1zM214 647h1v17h-1zM364 647h1v17h-1zM494 647h1v17h-1zM681 647h1v17h-1zM1018 647h1v17h-1z"/>
<path fill="#93e520" d="M163 664h1v12h-1zM203 664h1v12h-1zM247 664h1v12h-1zM250 664h1v12h-1zM353 664h1v12h-1zM387 664h1v12h-1zM436 664h1v12h-1zM440 664h1v12h-1zM670 676h1v14h-1zM675 664h1v12h-1zM676 664h1v12h-1zM785 664h1v12h-1zM918 664h1v12h-1zM927 664h1v12h-1zM936 664h1v12h-1zM1066 664h1v12h-1z"/>
<path fill="#1965ee" d="M166 584h1v21h-1zM482 584h1v21h-1zM621 584h1v21h-1zM717 584h1v21h-1zM874 584h1v21h-1zM915 581h1v24h-1z"/>
<path fill="#0b8ac6" d="M166 605h1v13h-1zM221 618h1v12h-1zM397 605h1v13h-1zM400 605h1v13h-1zM404 605h1v13h-1zM407 605h1v13h-1zM408 605h1v13h-1zM478 584h1v21h-1zM485 584h1v21h-1zM550 605h1v13h-1zM575 605h1v13h-1zM585 605h1v13h-1zM617 605h1v13h-1zM645 605h1v13h-1zM657 581h1v24h-1zM686 605h1v13h-1zM918 605h1v13h-1zM927 605h1v13h-1zM974 605h1v13h-1zM994 605h1v13h-1zM998 605h1v13h-1zM1004 605h1v13h-1zM1048 618h1v12h-1zM1068 605h1v13h-1zM1076 605h1v13h-1z"/>
<path fill="#06a697" d="M168 618h1v12h-1zM200 618h1v12h-1zM282 618h1v12h-1zM286 618h1v12h-1zM537 618h1v12h-1zM747 618h1v12h-1z"/>
<path fill="#176be9" d="M171 584h1v21h-1zM326 584h1v21h-1zM337 581h1v24h-1zM369 584h1v21h-1zM404 584h1v21h-1zM407 584h1v21h-1zM591 584h1v21h-1zM692 581h1v24h-1zM802 581h1v24h-1zM861 584h1v21h-1zM918 581h1v24h-1zM993 581h1v24h-1zM994 581h1v24h-1zM1030 584h1v21h-1z"/>
<path fill="#0792b8" d="M177 605h1v13h-1zM224 605h1v13h-1zM247 605h1v13h-1zM304 618h1v12h-1zM370 618h1v12h-1zM479 605h1v13h-1zM509 605h1v13h-1zM538 605h1v13h-1zM613 605h1v13h-1zM621 618h1v12h-1zM623 605h1v13h-1zM667 618h1v12h-1zM677 605h1v13h-1zM690 605h1v13h-1zM754 605h1v13h-1zM774 605h1v13h-1zM863 605h1v13h-1zM936 605h1v13h-1zM965 605h1v13h-1zM976 605h1v13h-1zM979 605h1v13h-1zM1008 605h1v13h-1zM1022 605h1v13h-1z"/>
<path fill="#3eca5c" d="M178 647h1v17h-1zM247 647h1v17h-1zM344 647h1v17h-1zM405 647h1v17h-1zM411 647h1v17h-1zM442 647h1v17h-1zM443 647h1v17h-1zM469 647h1v17h-1zM497 647h1v17h-1zM559 647h1v17h-1zM580 647h1v17h-1zM581 647h1v17h-1zM822 647h1v17h-1zM838 647h1v17h-1zM926 647h1v17h-1zM936 647h1v17h-1zM967 647h1v17h-1zM1021 647h1v17h-1zM1042 647h1v17h-1zM1043 647h1v17h-1z"/>
<path fill="#a1e914" d="M178 664h1v12h-1zM182 664h1v12h-1zM401 664h1v12h-1zM432 664h1v12h-1zM438 664h1v12h-1zM540 664h1v12h-1zM626 664h1v12h-1zM713 664h1v12h-1zM752 664h1v12h-1zM783 664h1v12h-1zM786 664h1v12h-1zM825 664h1v12h-1zM950 664h1v12h-1zM951 664h1v12h-1zM966 664h1v12h-1zM1054 664h1v12h-1z"/>
<path fill="#cce000" d="M178 676h1v14h-1zM333 676h1v14h-1zM405 676h1v14h-1zM507 676h1v14h-1zM666 676h1v14h-1zM738 676h1v14h-1zM748 676h1v14h-1zM752 676h1v14h-1zM795 676h1v14h-1zM825 676h1v14h-1zM838 676h1v14h-1zM950 676h1v14h-1zM1040 676h1v14h-1z"/>
<path fill="#0f0fa2" d="M181 531h1v24h-1zM190 531h1v24h-1zM364 527h1v24h-1zM397 527h1v24h-1zM404 527h1v24h-1zM463 527h1v24h-1zM489 551h1v17h-1zM585 531h1v24h-1zM830 531h1v24h-1zM857 531h1v24h-1zM887 555h1v13h-1zM954 531h1v24h-1zM957 531h1v24h-1zM1050 527h1v24h-1zM1072 531h1v24h-1z"/>
<path fill="#44cc58" d="M188 647h1v17h-1zM267 647h1v17h-1zM271 647h1v17h-1zM353 647h1v17h-1zM387 647h1v17h-1zM395 647h1v17h-1zM403 647h1v17h-1zM423 647h1v17h-1zM438 647h1v17h-1zM458 647h1v17h-1zM640 647h1v17h-1zM688 647h1v17h-1zM701 647h1v17h-1zM715 647h1v17h-1zM752 647h1v17h-1zM763 647h1v17h-1zM810 647h1v17h-1zM812 647h1v17h-1zM837 647h1v17h-1zM1049 647h1v17h-1z"/>
<path fill="#0cac8f" d="M201 618h1v12h-1zM292 618h1v12h-1zM311 618h1v12h-1zM536 630h1v17h-1zM550 630h1v17h-1zM552 630h1v17h-1zM564 630h1v17h-1zM622 630h1v17h-1zM679 618h1v12h-1z"/>
<path fill="#b3ef04" d="M204 676h1v14h-1zM230 676h1v14h-1zM242 676h1v14h-1zM245 664h1v12h-1zM297 676h1v14h-1zM355 664h1v12h-1zM380 676h1v14h-1zM385 676h1v14h-1zM420 676h1v14h-1zM435 676h1v14h-1zM463 676h1v14h-1zM552 676h1v14h-1zM637 664h1v12h-1zM675 676h1v14h-1zM689 676h1v14h-1zM875 676h1v14h-1zM918 676h1v14h-1zM1027 676h1v14h-1z"/>
<path fill="#97e71c" d="M209 664h1v12h-1zM240 664h1v12h-1zM388 664h1v12h-1zM423 664h1v12h-1zM428 664h1v12h-1zM435 664h1v12h-1zM437 664h1v12h-1zM701 664h1v12h-1zM763 664h1v12h-1zM822 664h1v12h-1zM837 664h1v12h-1zM921 664h1v12h-1zM922 664h1v12h-1zM935 664h1v12h-1zM965 664h1v12h-1zM1042 664h1v12h-1z"/>
<path fill="#0faf8a" d="M213 630h1v17h-1zM266 630h1v17h-1zM287 630h1v17h-1zM313 630h1v17h-1zM404 630h1v17h-1zM582 630h1v17h-1zM733 630h1v17h-1zM750 630h1v17h-1zM788 630h1v17h-1zM925 630h1v17h-1zM935 630h1v17h-1zM942 630h1v17h-1zM976 630h1v17h-1zM1006 630h1v17h-1zM1024 630h1v17h-1zM1043 630h1v17h-1zM1076 630h1v17h-1z"/>
<path fill="#1dbd74" d="M221 647h1v17h-1zM292 630h1v17h-1zM316 647h1v17h-1zM356 647h1v17h-1zM373 630h1v17h-1zM801 647h1v17h-1zM908 647h1v17h-1z"/>
<path fill="#b8f000" d="M243 676h1v14h-1zM289 676h1v14h-1zM429 676h1v14h-1zM483 676h1v14h-1zM673 676h1v14h-1zM997 676h1v14h-1z"/>
<path fill="#68d840" d="M245 647h1v17h-1zM339 647h1v17h-1zM827 647h1v17h-1zM843 647h1v17h-1z"/>
<path fill="#d6d800" d="M245 676h1v14h-1zM359 676h1v14h-1zM485 676h1v14h-1z"/>
<path fill="#03a39c" d="M247 618h1v12h-1zM269 618h1v12h-1zM301 618h1v12h-1zM333 618h1v12h-1zM342 618h1v12h-1zM444 618h1v12h-1zM502 618h1v12h-1zM507 618h1v12h-1zM712 618h1v12h-1zM831 618h1v12h-1z"/>
<path fill="#a5eb10" d="M248 664h1v12h-1zM255 664h1v12h-1zM282 664h1v12h-1zM286 664h1v12h-1zM316 676h1v14h-1zM330 664h1v12h-1zM497 664h1v12h-1zM685 664h1v12h-1zM738 664h1v12h-1zM784 664h1v12h-1zM823 676h1v14h-1zM831 664h1v12h-1zM838 664h1v12h-1zM967 664h1v12h-1zM1040 664h1v12h-1z"/>
<path fill="#5cd448" d="M255 647h1v17h-1zM268 647h1v17h-1zM416 647h1v17h-1zM747 647h1v17h-1z"/>
<path fill="#cfdd00" d="M255 676h1v14h-1zM583 676h1v14h-1zM784 676h1v14h-1zM1053 676h1v14h-1z"/>
<path fill="#1fbf72" d="M259 630h1v17h-1zM541 647h1v17h-1zM621 647h1v17h-1zM651 630h1v17h-1zM673 647h1v17h-1zM721 647h1v17h-1zM827 630h1v17h-1zM898 647h1v17h-1z"/>
<path fill="#c9e300" d="M268 676h1v14h-1zM310 676h1v14h-1zM393 676h1v14h-1zM440 676h1v14h-1zM492 676h1v14h-1zM747 676h1v14h-1zM777 676h1v14h-1zM967 676h1v14h-1zM1052 676h1v14h-1z"/>
<path fill="#0c0c98" d="M281 531h1v24h-1zM729 527h1v24h-1z"/>
<path fill="#1111a7" d="M304 531h1v24h-1zM337 531h1v24h-1zM350 527h1v24h-1zM541 527h1v24h-1zM545 527h1v24h-1zM664 527h1v24h-1zM670 551h1v17h-1zM776 531h1v24h-1zM801 531h1v24h-1zM807 527h1v24h-1zM858 531h1v24h-1zM944 531h1v24h-1z"/>
<path fill="#1a61f1" d="M308 581h1v24h-1zM370 584h1v21h-1zM397 584h1v21h-1zM465 584h1v21h-1zM619 584h1v21h-1zM635 584h1v21h-1zM889 581h1v24h-1z"/>
<path fill="#1b5ef4" d="M309 581h1v24h-1zM536 584h1v21h-1zM1068 584h1v21h-1z"/>
<path fill="#74dc38" d="M316 664h1v12h-1zM686 664h1v12h-1zM1045 664h1v12h-1z"/>
<path fill="#11b186" d="M344 630h1v17h-1zM365 630h1v17h-1zM366 630h1v17h-1zM587 630h1v17h-1zM645 630h1v17h-1zM711 630h1v17h-1zM755 630h1v17h-1zM910 630h1v17h-1zM922 630h1v17h-1zM989 630h1v17h-1zM998 630h1v17h-1zM1020 630h1v17h-1zM1021 630h1v17h-1z"/>
<path fill="#d9d500" d="M355 676h1v14h-1zM456 676h1v14h-1z"/>
<path fill="#50d050" d="M357 647h1v17h-1zM373 647h1v17h-1zM478 647h1v17h-1zM711 647h1v17h-1zM785 647h1v17h-1zM836 647h1v17h-1zM950 647h1v17h-1zM1031 647h1v17h-1z"/>
<path fill="#afed08" d="M357 664h1v12h-1zM373 664h1v12h-1zM453 676h1v14h-1zM458 664h1v12h-1zM577 664h1v12h-1zM583 664h1v12h-1zM678 676h1v14h-1zM981 676h1v14h-1z"/>
<path fill="#38c860" d="M360 647h1v17h-1zM425 647h1v17h-1zM435 647h1v17h-1zM436 647h1v17h-1zM437 647h1v17h-1zM582 647h1v17h-1zM611 647h1v17h-1zM676 647h1v17h-1zM712 647h1v17h-1zM824 647h1v17h-1zM904 647h1v17h-1zM918 647h1v17h-1zM989 647h1v17h-1zM1006 647h1v17h-1z"/>
<path fill="#1868ec" d="M381 584h1v21h-1zM475 584h1v21h-1zM543 584h1v21h-1zM564 584h1v21h-1zM617 584h1v21h-1zM708 584h1v21h-1zM729 584h1v21h-1zM895 581h1v24h-1zM962 581h1v24h-1zM1075 584h1v21h-1z"/>
<path fill="#1aba79" d="M466 630h1v17h-1zM709 630h1v17h-1zM725 630h1v17h-1zM747 630h1v17h-1zM748 630h1v17h-1zM1041 630h1v17h-1z"/>
<path fill="#80e030" d="M470 664h1v12h-1zM735 664h1v12h-1z"/>
<path fill="#62d644" d="M489 664h1v12h-1zM577 647h1v17h-1zM637 647h1v17h-1zM748 647h1v17h-1zM919 647h1v17h-1zM1040 647h1v17h-1z"/>
<path fill="#09098e" d="M670 527h1v24h-1z"/>
<path fill="#ddd300" d="M860 676h1v14h-1z"/>
<line x1="91" y1="686.5" x2="95" y2="686.5" stroke="#333" stroke-width="1"/>
<line x1="91" y1="680.5" x2="95" y2="680.5" stroke="#333" stroke-width="1"/>
<line x1="91" y1="675.5" x2="95" y2="675.5" stroke="#333" stroke-width="1"/>
<line x1="91" y1="671.5" x2="95" y2="671.5" stroke="#333" stroke-width="1"/>
<line x1="91" y1="667.5" x2="95" y2="667.5" stroke="#333" stroke-width="1"/>
<line x1="91" y1="664.5" x2="95" y2="664.5" stroke="#333" stroke-width="1"/>
<line x1="91" y1="661.5" x2="95" y2="661.5" stroke="#333" stroke-width="1"/>
<line x1="87" y1="659.5" x2="95" y2="659.5" stroke="#333" stroke-width="1"/>
<line x1="91" y1="643.5" x2="95" y2="643.5" stroke="#333" stroke-width="1"/>
<line x1="91" y1="634.5" x2="95" y2="634.5" stroke="#333" stroke-width="1"/>
<line x1="91" y1="627.5" x2="95" y2="627.5" stroke="#333" stroke-width="1"/>
<line x1="91" y1="622.5" x2="95" y2="622.5" stroke="#333" stroke-width="1"/>
<line x1="91" y1="618.5" x2="95" y2="618.5" stroke="#333" stroke-width="1"/>
<line x1="91" y1="615.5" x2="95" y2="615.5" stroke="#333" stroke-width="1"/>
<line x1="91" y1="612.5" x2="95" y2="612.5" stroke="#333" stroke-width="1"/>
<line x1="91" y1="609.5" x2="95" y2="609.5" stroke="#333" stroke-width="1"/>
<line x1="87" y1="606.5" x2="95" y2="606.5" stroke="#333" stroke-width="1"/>
<line x1="91" y1="591.5" x2="95" y2="591.5" stroke="#333" stroke-width="1"/>
<line x1="91" y1="581.5" x2="95" y2="581.5" stroke="#333" stroke-width="1"/>
<line x1="91" y1="575.5" x2="95" y2="575.5" stroke="#333" stroke-width="1"/>
<line x1="91" y1="570.5" x2="95" y2="570.5" stroke="#333" stroke-width="1"/>
<line x1="91" y1="566.5" x2="95" y2="566.5" stroke="#333" stroke-width="1"/>
<line x1="91" y1="562.5" x2="95" y2="562.5" stroke="#333" stroke-width="1"/>
<line x1="91" y1="559.5" x2="95" y2="559.5" stroke="#333" stroke-width="1"/>
<line x1="91" y1="556.5" x2="95" y2="556.5" stroke="#333" stroke-width="1"/>
<line x1="87" y1="554.5" x2="95" y2="554.5" stroke="#333" stroke-width="1"/>
<line x1="91" y1="538.5" x2="95" y2="538.5" stroke="#333" stroke-width="1"/>
<line x1="91" y1="529.5" x2="95" y2="529.5" stroke="#333" stroke-width="1"/>
<line x1="91" y1="522.5" x2="95" y2="522.5" stroke="#333" stroke-width="1"/>
<line x1="91" y1="517.5" x2="95" y2="517.5" stroke="#333" stroke-width="1"/>
<line x1="91" y1="513.5" x2="95" y2="513.5" stroke="#333" stroke-width="1"/>
<text x="60.75" y="666.75" textLength="14.6" lengthAdjust="spacingAndGlyphs" font-size="12" fill="#333">10</text>
<text x="76.0" y="660.75" textLength="6.6" lengthAdjust="spacingAndGlyphs" font-size="12" fill="#333">2</text>
<text x="60.75" y="613.75" textLength="14.6" lengthAdjust="spacingAndGlyphs" font-size="12" fill="#333">10</text>
<text x="76.0" y="607.75" textLength="6.6" lengthAdjust="spacingAndGlyphs" font-size="12" fill="#333">3</text>
<text x="60.75" y="561.75" textLength="14.6" lengthAdjust="spacingAndGlyphs" font-size="12" fill="#333">10</text>
<text x="76.0" y="555.75" textLength="6.6" lengthAdjust="spacingAndGlyphs" font-size="12" fill="#333">4</text>
<text x="10" y="537" textLength="64" lengthAdjust="spacingAndGlyphs" font-size="12" fill="#333">LEMMS Ions</text>
<text x="0" y="0" font-size="12" fill="#333" text-anchor="middle" textLength="72" lengthAdjust="spacingAndGlyphs" transform="translate(51,602) rotate(-90)">Energy (keV)</text>
<rect x="1092" y="515" width="12" height="177" fill="url(#cb)"/>
<line x1="1104.5" y1="515" x2="1104.5" y2="692" stroke="#333" stroke-width="1"/>
<line x1="1104" y1="691.5" x2="1109" y2="691.5" stroke="#333" stroke-width="1"/>
<line x1="1104" y1="672.5" x2="1113" y2="672.5" stroke="#333" stroke-width="1"/>
<line x1="1104" y1="652.5" x2="1109" y2="652.5" stroke="#333" stroke-width="1"/>
<line x1="1104" y1="632.5" x2="1113" y2="632.5" stroke="#333" stroke-width="1"/>
<line x1="1104" y1="613.5" x2="1109" y2="613.5" stroke="#333" stroke-width="1"/>
<line x1="1104" y1="593.5" x2="1113" y2="593.5" stroke="#333" stroke-width="1"/>
<line x1="1104" y1="573.5" x2="1109" y2="573.5" stroke="#333" stroke-width="1"/>
<line x1="1104" y1="554.5" x2="1113" y2="554.5" stroke="#333" stroke-width="1"/>
<line x1="1104" y1="534.5" x2="1109" y2="534.5" stroke="#333" stroke-width="1"/>
<line x1="1104" y1="515.5" x2="1113" y2="515.5" stroke="#333" stroke-width="1"/>
<text x="1117.15" y="522.75" textLength="14.6" lengthAdjust="spacingAndGlyphs" font-size="12" fill="#333">10</text>
<text x="1132.4" y="516.75" textLength="6.6" lengthAdjust="spacingAndGlyphs" font-size="12" fill="#333">4</text>
<text x="1117.15" y="561.75" textLength="14.6" lengthAdjust="spacingAndGlyphs" font-size="12" fill="#333">10</text>
<text x="1132.4" y="555.75" textLength="6.6" lengthAdjust="spacingAndGlyphs" font-size="12" fill="#333">2</text>
<text x="1117.15" y="600.75" textLength="14.6" lengthAdjust="spacingAndGlyphs" font-size="12" fill="#333">10</text>
<text x="1132.4" y="594.75" textLength="6.6" lengthAdjust="spacingAndGlyphs" font-size="12" fill="#333">0</text>
<text x="1117.15" y="639.75" textLength="14.6" lengthAdjust="spacingAndGlyphs" font-size="12" fill="#333">10</text>
<text x="1132.4" y="633.75" textLength="14.6" lengthAdjust="spacingAndGlyphs" font-size="12" fill="#333">−2</text>
<text x="1117.15" y="679.75" textLength="14.6" lengthAdjust="spacingAndGlyphs" font-size="12" fill="#333">10</text>
<text x="1132.4" y="673.75" textLength="14.6" lengthAdjust="spacingAndGlyphs" font-size="12" fill="#333">−4</text>
<text x="0" y="0" font-size="12" fill="#333" text-anchor="middle" textLength="169" lengthAdjust="spacingAndGlyphs" transform="translate(1156.5,602) rotate(90)">intensity 1/(s cm^2 ster keV)</text>
<rect x="95.5" y="695.5" width="985" height="15" fill="#00ff00" stroke="#111" stroke-width="1"/>
<rect x="95" y="695" width="2" height="16" fill="#111"/>
<text x="79" y="707" text-anchor="end" textLength="49" lengthAdjust="spacingAndGlyphs" font-size="12" fill="#333">Sunlight?</text>
<line x1="136.5" y1="711" x2="136.5" y2="715" stroke="#333" stroke-width="1"/>
<line x1="177.5" y1="711" x2="177.5" y2="715" stroke="#333" stroke-width="1"/>
<line x1="218.5" y1="711" x2="218.5" y2="719" stroke="#333" stroke-width="1"/>
<line x1="259.5" y1="711" x2="259.5" y2="715" stroke="#333" stroke-width="1"/>
<line x1="300.5" y1="711" x2="300.5" y2="715" stroke="#333" stroke-width="1"/>
<line x1="341.5" y1="711" x2="341.5" y2="719" stroke="#333" stroke-width="1"/>
<line x1="382.5" y1="711" x2="382.5" y2="715" stroke="#333" stroke-width="1"/>
<line x1="423.5" y1="711" x2="423.5" y2="715" stroke="#333" stroke-width="1"/>
<line x1="464.5" y1="711" x2="464.5" y2="719" stroke="#333" stroke-width="1"/>
<line x1="505.5" y1="711" x2="505.5" y2="715" stroke="#333" stroke-width="1"/>
<line x1="546.5" y1="711" x2="546.5" y2="715" stroke="#333" stroke-width="1"/>
<line x1="587.5" y1="711" x2="587.5" y2="719" stroke="#333" stroke-width="1"/>
<line x1="628.5" y1="711" x2="628.5" y2="715" stroke="#333" stroke-width="1"/>
<line x1="669.5" y1="711" x2="669.5" y2="715" stroke="#333" stroke-width="1"/>
<line x1="710.5" y1="711" x2="710.5" y2="719" stroke="#333" stroke-width="1"/>
<line x1="751.5" y1="711" x2="751.5" y2="715" stroke="#333" stroke-width="1"/>
<line x1="792.5" y1="711" x2="792.5" y2="715" stroke="#333" stroke-width="1"/>
<line x1="833.5" y1="711" x2="833.5" y2="719" stroke="#333" stroke-width="1"/>
<line x1="874.5" y1="711" x2="874.5" y2="715" stroke="#333" stroke-width="1"/>
<line x1="915.5" y1="711" x2="915.5" y2="715" stroke="#333" stroke-width="1"/>
<line x1="956.5" y1="711" x2="956.5" y2="719" stroke="#333" stroke-width="1"/>
<line x1="997.5" y1="711" x2="997.5" y2="715" stroke="#333" stroke-width="1"/>
<line x1="1038.5" y1="711" x2="1038.5" y2="715" stroke="#333" stroke-width="1"/>
<line x1="1080.5" y1="711" x2="1080.5" y2="719" stroke="#333" stroke-width="1"/>
<text x="218.125" y="734" text-anchor="middle" textLength="35" lengthAdjust="spacingAndGlyphs" font-size="12" fill="#333">03:00</text>
<text x="235.625" y="749" text-anchor="end" textLength="28" lengthAdjust="spacingAndGlyphs" font-size="12" fill="#333">3.29</text>
<text x="235.625" y="764" text-anchor="end" textLength="35" lengthAdjust="spacingAndGlyphs" font-size="12" fill="#333">57.85</text>
<text x="235.625" y="779" text-anchor="end" textLength="35" lengthAdjust="spacingAndGlyphs" font-size="12" fill="#333">80.36</text>
<text x="341.25" y="734" text-anchor="middle" textLength="35" lengthAdjust="spacingAndGlyphs" font-size="12" fill="#333">06:00</text>
<text x="358.75" y="749" text-anchor="end" textLength="28" lengthAdjust="spacingAndGlyphs" font-size="12" fill="#333">3.31</text>
<text x="358.75" y="764" text-anchor="end" textLength="35" lengthAdjust="spacingAndGlyphs" font-size="12" fill="#333">57.79</text>
<text x="358.75" y="779" text-anchor="end" textLength="35" lengthAdjust="spacingAndGlyphs" font-size="12" fill="#333">80.23</text>
<text x="464.375" y="734" text-anchor="middle" textLength="35" lengthAdjust="spacingAndGlyphs" font-size="12" fill="#333">09:00</text>
<text x="481.875" y="749" text-anchor="end" textLength="28" lengthAdjust="spacingAndGlyphs" font-size="12" fill="#333">3.33</text>
<text x="481.875" y="764" text-anchor="end" textLength="35" lengthAdjust="spacingAndGlyphs" font-size="12" fill="#333">57.73</text>
<text x="481.875" y="779" text-anchor="end" textLength="35" lengthAdjust="spacingAndGlyphs" font-size="12" fill="#333">80.09</text>
<text x="587.5" y="734" text-anchor="middle" textLength="35" lengthAdjust="spacingAndGlyphs" font-size="12" fill="#333">12:00</text>
<text x="605.0" y="749" text-anchor="end" textLength="28" lengthAdjust="spacingAndGlyphs" font-size="12" fill="#333">3.35</text>
<text x="605.0" y="764" text-anchor="end" textLength="35" lengthAdjust="spacingAndGlyphs" font-size="12" fill="#333">57.66</text>
<text x="605.0" y="779" text-anchor="end" textLength="35" lengthAdjust="spacingAndGlyphs" font-size="12" fill="#333">79.94</text>
<text x="710.625" y="734" text-anchor="middle" textLength="35" lengthAdjust="spacingAndGlyphs" font-size="12" fill="#333">15:00</text>
<text x="728.125" y="749" text-anchor="end" textLength="28" lengthAdjust="spacingAndGlyphs" font-size="12" fill="#333">3.37</text>
<text x="728.125" y="764" text-anchor="end" textLength="35" lengthAdjust="spacingAndGlyphs" font-size="12" fill="#333">57.59</text>
<text x="728.125" y="779" text-anchor="end" textLength="35" lengthAdjust="spacingAndGlyphs" font-size="12" fill="#333">79.79</text>
<text x="833.75" y="734" text-anchor="middle" textLength="35" lengthAdjust="spacingAndGlyphs" font-size="12" fill="#333">18:00</text>
<text x="851.25" y="749" text-anchor="end" textLength="28" lengthAdjust="spacingAndGlyphs" font-size="12" fill="#333">3.39</text>
<text x="851.25" y="764" text-anchor="end" textLength="35" lengthAdjust="spacingAndGlyphs" font-size="12" fill="#333">57.51</text>
<text x="851.25" y="779" text-anchor="end" textLength="35" lengthAdjust="spacingAndGlyphs" font-size="12" fill="#333">79.63</text>
<text x="956.875" y="734" text-anchor="middle" textLength="35" lengthAdjust="spacingAndGlyphs" font-size="12" fill="#333">21:00</text>
<text x="974.375" y="749" text-anchor="end" textLength="28" lengthAdjust="spacingAndGlyphs" font-size="12" fill="#333">3.41</text>
<text x="974.375" y="764" text-anchor="end" textLength="35" lengthAdjust="spacingAndGlyphs" font-size="12" fill="#333">57.43</text>
<text x="974.375" y="779" text-anchor="end" textLength="35" lengthAdjust="spacingAndGlyphs" font-size="12" fill="#333">79.45</text>
<text x="1080.0" y="734" text-anchor="middle" textLength="35" lengthAdjust="spacingAndGlyphs" font-size="12" fill="#333">00:00</text>
<text x="1097.5" y="749" text-anchor="end" textLength="28" lengthAdjust="spacingAndGlyphs" font-size="12" fill="#333">3.43</text>
<text x="1097.5" y="764" text-anchor="end" textLength="35" lengthAdjust="spacingAndGlyphs" font-size="12" fill="#333">57.35</text>
<text x="1097.5" y="779" text-anchor="end" textLength="35" lengthAdjust="spacingAndGlyphs" font-size="12" fill="#333">79.28</text>
<text x="1062.5" y="746" textLength="61" lengthAdjust="spacingAndGlyphs" font-size="12" fill="#333">2015-060</text>
<text x="60" y="749" text-anchor="end" textLength="44" lengthAdjust="spacingAndGlyphs" font-size="12" fill="#333">LT (hrs)</text>
<text x="60" y="764" text-anchor="end" textLength="13.5" lengthAdjust="spacingAndGlyphs" font-size="12" fill="#333">Rs</text>
<text x="60" y="779" text-anchor="end" textLength="46.5" lengthAdjust="spacingAndGlyphs" font-size="12" fill="#333">Dipole L</text>
<clipPath id="c1"><rect x="215.5" y="802.5" width="151" height="148"/></clipPath>
<g clip-path="url(#c1)" fill="none" stroke-width="1.1">
<path d="M370.85,796.50 L366.18,798.00 L361.65,799.50 L357.25,801.00 L352.99,802.50 L348.86,804.00 L344.86,805.50 L340.98,807.00 L337.22,808.50 L333.59,810.00 L330.07,811.50 L326.67,813.00 L323.38,814.50 L320.20,816.00 L317.13,817.50 L314.16,819.00 L311.30,820.50 L308.54,822.00 L305.88,823.50 L303.32,825.00 L300.85,826.50 L298.48,828.00 L296.19,829.50 L294.00,831.00 L291.89,832.50 L289.88,834.00 L287.94,835.50 L286.09,837.00 L284.32,838.50 L282.64,840.00 L281.03,841.50 L279.49,843.00 L278.04,844.50 L276.66,846.00 L275.35,847.50 L274.12,849.00 L272.95,850.50 L271.86,852.00 L270.84,853.50 L269.89,855.00 L269.00,856.50 L268.18,858.00 L267.43,859.50 L266.75,861.00 L266.13,862.50 L265.57,864.00 L265.08,865.50 L264.65,867.00 L264.29,868.50 L263.98,870.00 L263.75,871.50 L263.57,873.00 L263.46,874.50 L263.40,876.00 L263.41,877.50 L263.49,879.00 L263.62,880.50 L263.82,882.00 L264.08,883.50 L264.40,885.00 L264.79,886.50 L265.24,888.00 L265.75,889.50 L266.33,891.00 L266.97,892.50 L267.68,894.00 L268.45,895.50 L269.29,897.00 L270.20,898.50 L271.17,900.00 L272.22,901.50 L273.33,903.00 L274.52,904.50 L275.78,906.00 L277.11,907.50 L278.52,909.00 L280.00,910.50 L281.55,912.00 L283.19,913.50 L284.90,915.00 L286.70,916.50 L288.58,918.00 L290.54,919.50 L292.59,921.00 L294.72,922.50 L296.94,924.00 L299.26,925.50 L301.66,927.00 L304.16,928.50 L306.76,930.00 L309.45,931.50 L312.25,933.00 L315.14,934.50 L318.14,936.00 L321.25,937.50 L324.46,939.00 L327.79,940.50 L331.23,942.00 L334.79,943.50 L338.46,945.00 L342.26,946.50 L346.18,948.00 L350.22,949.50 L354.40,951.00 L358.70,952.50 L363.15,954.00 L367.72,955.50" stroke="#6a3a0e" stroke-dasharray="2.5 1"/>
<path d="M304.74,796.50 L302.81,798.00 L300.92,799.50 L299.07,801.00 L297.26,802.50 L295.48,804.00 L293.73,805.50 L292.03,807.00 L290.35,808.50 L288.72,810.00 L287.12,811.50 L285.56,813.00 L284.04,814.50 L282.55,816.00 L281.10,817.50 L279.68,819.00 L278.30,820.50 L276.96,822.00 L275.65,823.50 L274.38,825.00 L273.15,826.50 L271.95,828.00 L270.79,829.50 L269.67,831.00 L268.58,832.50 L267.53,834.00 L266.52,835.50 L265.54,837.00 L264.60,838.50 L263.69,840.00 L262.82,841.50 L261.99,843.00 L261.19,844.50 L260.44,846.00 L259.71,847.50 L259.03,849.00 L258.38,850.50 L257.76,852.00 L257.18,853.50 L256.64,855.00 L256.14,856.50 L255.67,858.00 L255.24,859.50 L254.85,861.00 L254.49,862.50 L254.17,864.00 L253.88,865.50 L253.63,867.00 L253.42,868.50 L253.24,870.00 L253.10,871.50 L253.00,873.00 L252.93,874.50 L252.90,876.00 L252.91,877.50 L252.95,879.00 L253.03,880.50 L253.15,882.00 L253.30,883.50 L253.49,885.00 L253.71,886.50 L253.97,888.00 L254.27,889.50 L254.60,891.00 L254.97,892.50 L255.38,894.00 L255.82,895.50 L256.30,897.00 L256.82,898.50 L257.37,900.00 L257.96,901.50 L258.59,903.00 L259.25,904.50 L259.95,906.00 L260.68,907.50 L261.46,909.00 L262.26,910.50 L263.11,912.00 L263.99,913.50 L264.91,915.00 L265.86,916.50 L266.85,918.00 L267.88,919.50 L268.94,921.00 L270.04,922.50 L271.18,924.00 L272.35,925.50 L273.56,927.00 L274.80,928.50 L276.08,930.00 L277.40,931.50 L278.76,933.00 L280.15,934.50 L281.58,936.00 L283.04,937.50 L284.54,939.00 L286.08,940.50 L287.65,942.00 L289.26,943.50 L290.91,945.00 L292.59,946.50 L294.31,948.00 L296.06,949.50 L297.86,951.00 L299.69,952.50 L301.55,954.00 L303.45,955.50" stroke="#1010ff" stroke-dasharray="2.5 1"/>
</g>
<ellipse cx="291.0" cy="877.7" rx="19.6" ry="21.2" fill="none" stroke="#000" stroke-width="1.4"/>
<rect x="290.0" y="875.5" width="2" height="2" fill="#000"/>
<rect x="308.7" y="880" width="4" height="4" fill="#ff0000"/>
<polyline points="314.1,830.5 322.1,830.5" fill="none" stroke="#000" stroke-width="1.4"/>
<polyline points="327.5,833 331.5,839.4" fill="none" stroke="#000" stroke-width="1.4"/>
<circle cx="324.9" cy="831.9" r="3" fill="#0000ff"/>
<path d="M321.4 827.4L329.6 835.4M329.6 827.4L321.4 835.4" stroke="#ff0000" stroke-width="1.3"/>
<rect x="215.5" y="802.5" width="151" height="148" fill="none" stroke="#333" stroke-width="1"/>
<line x1="211" y1="803.5" x2="216" y2="803.5" stroke="#333"/>
<line x1="207" y1="813.5" x2="216" y2="813.5" stroke="#333"/>
<line x1="211" y1="824.5" x2="216" y2="824.5" stroke="#333"/>
<line x1="207" y1="834.5" x2="216" y2="834.5" stroke="#333"/>
<line x1="211" y1="845.5" x2="216" y2="845.5" stroke="#333"/>
<line x1="207" y1="855.5" x2="216" y2="855.5" stroke="#333"/>
<line x1="211" y1="866.5" x2="216" y2="866.5" stroke="#333"/>
<line x1="207" y1="876.5" x2="216" y2="876.5" stroke="#333"/>
<line x1="211" y1="887.5" x2="216" y2="887.5" stroke="#333"/>
<line x1="207" y1="897.5" x2="216" y2="897.5" stroke="#333"/>
<line x1="211" y1="908.5" x2="216" y2="908.5" stroke="#333"/>
<line x1="207" y1="918.5" x2="216" y2="918.5" stroke="#333"/>
<line x1="211" y1="929.5" x2="216" y2="929.5" stroke="#333"/>
<line x1="207" y1="939.5" x2="216" y2="939.5" stroke="#333"/>
<line x1="211" y1="950.5" x2="216" y2="950.5" stroke="#333"/>
<line x1="366.5" y1="951" x2="366.5" y2="955" stroke="#333"/>
<line x1="355.5" y1="951" x2="355.5" y2="955" stroke="#333"/>
<line x1="344.5" y1="951" x2="344.5" y2="959" stroke="#333"/>
<line x1="334.5" y1="951" x2="334.5" y2="955" stroke="#333"/>
<line x1="323.5" y1="951" x2="323.5" y2="955" stroke="#333"/>
<line x1="312.5" y1="951" x2="312.5" y2="955" stroke="#333"/>
<line x1="302.5" y1="951" x2="302.5" y2="955" stroke="#333"/>
<line x1="291.5" y1="951" x2="291.5" y2="959" stroke="#333"/>
<line x1="280.5" y1="951" x2="280.5" y2="955" stroke="#333"/>
<line x1="269.5" y1="951" x2="269.5" y2="955" stroke="#333"/>
<line x1="259.5" y1="951" x2="259.5" y2="955" stroke="#333"/>
<line x1="248.5" y1="951" x2="248.5" y2="955" stroke="#333"/>
<line x1="237.5" y1="951" x2="237.5" y2="959" stroke="#333"/>
<line x1="227.5" y1="951" x2="227.5" y2="955" stroke="#333"/>
<line x1="216.5" y1="951" x2="216.5" y2="955" stroke="#333"/>
<text x="204" y="818.0" text-anchor="end" textLength="25.2" lengthAdjust="spacingAndGlyphs" font-size="12" fill="#333">–60.</text>
<text x="204" y="839.0" text-anchor="end" textLength="25.2" lengthAdjust="spacingAndGlyphs" font-size="12" fill="#333">–40.</text>
<text x="204" y="860.0" text-anchor="end" textLength="25.2" lengthAdjust="spacingAndGlyphs" font-size="12" fill="#333">–20.</text>
<text x="204" y="881.0" text-anchor="end" textLength="11.1" lengthAdjust="spacingAndGlyphs" font-size="12" fill="#333">0.</text>
<text x="204" y="902.0" text-anchor="end" textLength="18.7" lengthAdjust="spacingAndGlyphs" font-size="12" fill="#333">20.</text>
<text x="204" y="923.0" text-anchor="end" textLength="18.7" lengthAdjust="spacingAndGlyphs" font-size="12" fill="#333">40.</text>
<text x="204" y="944.0" text-anchor="end" textLength="18.7" lengthAdjust="spacingAndGlyphs" font-size="12" fill="#333">60.</text>
<text x="238.9" y="974" text-anchor="middle" textLength="18.7" lengthAdjust="spacingAndGlyphs" font-size="12" fill="#333">50.</text>
<text x="292.5" y="974" text-anchor="middle" textLength="11.1" lengthAdjust="spacingAndGlyphs" font-size="12" fill="#333">0.</text>
<text x="346.1" y="974" text-anchor="middle" textLength="25.2" lengthAdjust="spacingAndGlyphs" font-size="12" fill="#333">–50.</text>
<text x="291" y="992" text-anchor="middle" textLength="38" lengthAdjust="spacingAndGlyphs" font-size="12" fill="#333">KSM–X</text>
<text x="0" y="0" text-anchor="middle" textLength="38" lengthAdjust="spacingAndGlyphs" transform="translate(168,876.5) rotate(-90)" font-size="12" fill="#333">KSM–Y</text>
<clipPath id="c2"><rect x="509.5" y="802.5" width="151" height="148"/></clipPath>
<g clip-path="url(#c2)" fill="none" stroke-width="1.1">
<path d="M585.38,796.50 L583.55,798.00 L581.75,799.50 L579.99,801.00 L578.27,802.50 L576.57,804.00 L574.92,805.50 L573.29,807.00 L571.70,808.50 L570.15,810.00 L568.63,811.50 L567.15,813.00 L565.70,814.50 L564.28,816.00 L562.90,817.50 L561.56,819.00 L560.25,820.50 L558.97,822.00 L557.73,823.50 L556.52,825.00 L555.35,826.50 L554.21,828.00 L553.11,829.50 L552.04,831.00 L551.01,832.50 L550.01,834.00 L549.04,835.50 L548.11,837.00 L547.22,838.50 L546.36,840.00 L545.53,841.50 L544.74,843.00 L543.98,844.50 L543.26,846.00 L542.58,847.50 L541.92,849.00 L541.31,850.50 L540.72,852.00 L540.17,853.50 L539.66,855.00 L539.18,856.50 L538.74,858.00 L538.33,859.50 L537.95,861.00 L537.61,862.50 L537.30,864.00 L537.03,865.50 L536.79,867.00 L536.59,868.50 L536.43,870.00 L536.29,871.50 L536.19,873.00 L536.13,874.50 L536.10,876.00 L536.11,877.50 L536.15,879.00 L536.22,880.50 L536.33,882.00 L536.48,883.50 L536.66,885.00 L536.87,886.50 L537.12,888.00 L537.40,889.50 L537.72,891.00 L538.07,892.50 L538.46,894.00 L538.88,895.50 L539.34,897.00 L539.83,898.50 L540.35,900.00 L540.91,901.50 L541.51,903.00 L542.14,904.50 L542.80,906.00 L543.50,907.50 L544.23,909.00 L545.00,910.50 L545.80,912.00 L546.64,913.50 L547.51,915.00 L548.42,916.50 L549.36,918.00 L550.34,919.50 L551.35,921.00 L552.39,922.50 L553.47,924.00 L554.59,925.50 L555.74,927.00 L556.92,928.50 L558.14,930.00 L559.39,931.50 L560.68,933.00 L562.00,934.50 L563.36,936.00 L564.75,937.50 L566.18,939.00 L567.64,940.50 L569.13,942.00 L570.67,943.50 L572.23,945.00 L573.83,946.50 L575.46,948.00 L577.13,949.50 L578.84,951.00 L580.58,952.50 L582.35,954.00 L584.16,955.50" stroke="#6a3a0e" stroke-dasharray="2.5 1"/>
<path d="M546.31,796.50 L545.30,798.00 L544.32,799.50 L543.36,801.00 L542.41,802.50 L541.48,804.00 L540.57,805.50 L539.68,807.00 L538.81,808.50 L537.96,810.00 L537.13,811.50 L536.32,813.00 L535.52,814.50 L534.75,816.00 L533.99,817.50 L533.25,819.00 L532.53,820.50 L531.83,822.00 L531.15,823.50 L530.49,825.00 L529.85,826.50 L529.23,828.00 L528.62,829.50 L528.04,831.00 L527.47,832.50 L526.92,834.00 L526.39,835.50 L525.88,837.00 L525.39,838.50 L524.92,840.00 L524.47,841.50 L524.04,843.00 L523.62,844.50 L523.23,846.00 L522.85,847.50 L522.49,849.00 L522.15,850.50 L521.83,852.00 L521.53,853.50 L521.25,855.00 L520.99,856.50 L520.74,858.00 L520.52,859.50 L520.31,861.00 L520.13,862.50 L519.96,864.00 L519.81,865.50 L519.68,867.00 L519.57,868.50 L519.48,870.00 L519.41,871.50 L519.35,873.00 L519.32,874.50 L519.30,876.00 L519.30,877.50 L519.33,879.00 L519.37,880.50 L519.43,882.00 L519.51,883.50 L519.60,885.00 L519.72,886.50 L519.86,888.00 L520.01,889.50 L520.19,891.00 L520.38,892.50 L520.59,894.00 L520.82,895.50 L521.07,897.00 L521.34,898.50 L521.63,900.00 L521.94,901.50 L522.26,903.00 L522.61,904.50 L522.97,906.00 L523.36,907.50 L523.76,909.00 L524.18,910.50 L524.62,912.00 L525.08,913.50 L525.56,915.00 L526.05,916.50 L526.57,918.00 L527.10,919.50 L527.66,921.00 L528.23,922.50 L528.82,924.00 L529.43,925.50 L530.06,927.00 L530.71,928.50 L531.38,930.00 L532.07,931.50 L532.77,933.00 L533.50,934.50 L534.24,936.00 L535.00,937.50 L535.78,939.00 L536.59,940.50 L537.40,942.00 L538.24,943.50 L539.10,945.00 L539.98,946.50 L540.87,948.00 L541.79,949.50 L542.72,951.00 L543.67,952.50 L544.65,954.00 L545.64,955.50" stroke="#1010ff" stroke-dasharray="2.5 1"/>
</g>
<polyline points="551.4,891.5 619.7,862" fill="none" stroke="#000" stroke-width="1.5"/>
<path d="M582.0 876.5L585.0 874.0L588.0 876.5L585.0 879.0Z" fill="#fff" stroke="#000" stroke-width="1"/>
<rect x="617.7" y="860" width="4" height="4" fill="#ff0000"/>
<path d="M625.4 845 Q640 836 650 834 L655.8 833.5" fill="none" stroke="#000" stroke-width="1.4"/>
<circle cx="643" cy="836" r="3.2" fill="#0000ff"/>
<path d="M640.6 831.2L648.8 839.2M648.8 831.2L640.6 839.2" stroke="#ff0000" stroke-width="1.3"/>
<rect x="509.5" y="802.5" width="151" height="148" fill="none" stroke="#333" stroke-width="1"/>
<line x1="501" y1="950.5" x2="510" y2="950.5" stroke="#333"/>
<line x1="505" y1="948.5" x2="510" y2="948.5" stroke="#333"/>
<line x1="505" y1="946.5" x2="510" y2="946.5" stroke="#333"/>
<line x1="505" y1="944.5" x2="510" y2="944.5" stroke="#333"/>
<line x1="505" y1="942.5" x2="510" y2="942.5" stroke="#333"/>
<line x1="505" y1="941.5" x2="510" y2="941.5" stroke="#333"/>
<line x1="505" y1="939.5" x2="510" y2="939.5" stroke="#333"/>
<line x1="505" y1="937.5" x2="510" y2="937.5" stroke="#333"/>
<line x1="505" y1="935.5" x2="510" y2="935.5" stroke="#333"/>
<line x1="505" y1="933.5" x2="510" y2="933.5" stroke="#333"/>
<line x1="501" y1="931.5" x2="510" y2="931.5" stroke="#333"/>
<line x1="505" y1="930.5" x2="510" y2="930.5" stroke="#333"/>
<line x1="505" y1="928.5" x2="510" y2="928.5" stroke="#333"/>
<line x1="505" y1="926.5" x2="510" y2="926.5" stroke="#333"/>
<line x1="505" y1="924.5" x2="510" y2="924.5" stroke="#333"/>
<line x1="505" y1="922.5" x2="510" y2="922.5" stroke="#333"/>
<line x1="505" y1="920.5" x2="510" y2="920.5" stroke="#333"/>
<line x1="505" y1="919.5" x2="510" y2="919.5" stroke="#333"/>
<line x1="505" y1="917.5" x2="510" y2="917.5" stroke="#333"/>
<line x1="505" y1="915.5" x2="510" y2="915.5" stroke="#333"/>
<line x1="501" y1="913.5" x2="510" y2="913.5" stroke="#333"/>
<line x1="505" y1="911.5" x2="510" y2="911.5" stroke="#333"/>
<line x1="505" y1="909.5" x2="510" y2="909.5" stroke="#333"/>
<line x1="505" y1="908.5" x2="510" y2="908.5" stroke="#333"/>
<line x1="505" y1="906.5" x2="510" y2="906.5" stroke="#333"/>
<line x1="505" y1="904.5" x2="510" y2="904.5" stroke="#333"/>
<line x1="505" y1="902.5" x2="510" y2="902.5" stroke="#333"/>
<line x1="505" y1="900.5" x2="510" y2="900.5" stroke="#333"/>
<line x1="505" y1="898.5" x2="510" y2="898.5" stroke="#333"/>
<line x1="505" y1="897.5" x2="510" y2="897.5" stroke="#333"/>
<line x1="501" y1="895.5" x2="510" y2="895.5" stroke="#333"/>
<line x1="505" y1="893.5" x2="510" y2="893.5" stroke="#333"/>
<line x1="505" y1="891.5" x2="510" y2="891.5" stroke="#333"/>
<line x1="505" y1="889.5" x2="510" y2="889.5" stroke="#333"/>
<line x1="505" y1="887.5" x2="510" y2="887.5" stroke="#333"/>
<line x1="505" y1="885.5" x2="510" y2="885.5" stroke="#333"/>
<line x1="505" y1="884.5" x2="510" y2="884.5" stroke="#333"/>
<line x1="505" y1="882.5" x2="510" y2="882.5" stroke="#333"/>
<line x1="505" y1="880.5" x2="510" y2="880.5" stroke="#333"/>
<line x1="505" y1="878.5" x2="510" y2="878.5" stroke="#333"/>
<line x1="501" y1="876.5" x2="510" y2="876.5" stroke="#333"/>
<line x1="505" y1="874.5" x2="510" y2="874.5" stroke="#333"/>
<line x1="505" y1="873.5" x2="510" y2="873.5" stroke="#333"/>
<line x1="505" y1="871.5" x2="510" y2="871.5" stroke="#333"/>
<line x1="505" y1="869.5" x2="510" y2="869.5" stroke="#333"/>
<line x1="505" y1="867.5" x2="510" y2="867.5" stroke="#333"/>
<line x1="505" y1="865.5" x2="510" y2="865.5" stroke="#333"/>
<line x1="505" y1="863.5" x2="510" y2="863.5" stroke="#333"/>
<line x1="505" y1="862.5" x2="510" y2="862.5" stroke="#333"/>
<line x1="505" y1="860.5" x2="510" y2="860.5" stroke="#333"/>
<line x1="501" y1="858.5" x2="510" y2="858.5" stroke="#333"/>
<line x1="505" y1="856.5" x2="510" y2="856.5" stroke="#333"/>
<line x1="505" y1="854.5" x2="510" y2="854.5" stroke="#333"/>
<line x1="505" y1="852.5" x2="510" y2="852.5" stroke="#333"/>
<line x1="505" y1="851.5" x2="510" y2="851.5" stroke="#333"/>
<line x1="505" y1="849.5" x2="510" y2="849.5" stroke="#333"/>
<line x1="505" y1="847.5" x2="510" y2="847.5" stroke="#333"/>
<line x1="505" y1="845.5" x2="510" y2="845.5" stroke="#333"/>
<line x1="505" y1="843.5" x2="510" y2="843.5" stroke="#333"/>
<line x1="505" y1="841.5" x2="510" y2="841.5" stroke="#333"/>
<line x1="501" y1="840.5" x2="510" y2="840.5" stroke="#333"/>
<line x1="505" y1="838.5" x2="510" y2="838.5" stroke="#333"/>
<line x1="505" y1="836.5" x2="510" y2="836.5" stroke="#333"/>
<line x1="505" y1="834.5" x2="510" y2="834.5" stroke="#333"/>
<line x1="505" y1="832.5" x2="510" y2="832.5" stroke="#333"/>
<line x1="505" y1="830.5" x2="510" y2="830.5" stroke="#333"/>
<line x1="505" y1="829.5" x2="510" y2="829.5" stroke="#333"/>
<line x1="505" y1="827.5" x2="510" y2="827.5" stroke="#333"/>
<line x1="505" y1="825.5" x2="510" y2="825.5" stroke="#333"/>
<line x1="505" y1="823.5" x2="510" y2="823.5" stroke="#333"/>
<line x1="501" y1="821.5" x2="510" y2="821.5" stroke="#333"/>
<line x1="505" y1="819.5" x2="510" y2="819.5" stroke="#333"/>
<line x1="505" y1="818.5" x2="510" y2="818.5" stroke="#333"/>
<line x1="505" y1="816.5" x2="510" y2="816.5" stroke="#333"/>
<line x1="505" y1="814.5" x2="510" y2="814.5" stroke="#333"/>
<line x1="505" y1="812.5" x2="510" y2="812.5" stroke="#333"/>
<line x1="505" y1="810.5" x2="510" y2="810.5" stroke="#333"/>
<line x1="505" y1="808.5" x2="510" y2="808.5" stroke="#333"/>
<line x1="505" y1="806.5" x2="510" y2="806.5" stroke="#333"/>
<line x1="505" y1="805.5" x2="510" y2="805.5" stroke="#333"/>
<line x1="501" y1="803.5" x2="510" y2="803.5" stroke="#333"/>
<line x1="660.5" y1="951" x2="660.5" y2="959" stroke="#333"/>
<line x1="641.5" y1="951" x2="641.5" y2="955" stroke="#333"/>
<line x1="622.5" y1="951" x2="622.5" y2="959" stroke="#333"/>
<line x1="604.5" y1="951" x2="604.5" y2="955" stroke="#333"/>
<line x1="585.5" y1="951" x2="585.5" y2="959" stroke="#333"/>
<line x1="566.5" y1="951" x2="566.5" y2="955" stroke="#333"/>
<line x1="547.5" y1="951" x2="547.5" y2="959" stroke="#333"/>
<line x1="529.5" y1="951" x2="529.5" y2="955" stroke="#333"/>
<line x1="510.5" y1="951" x2="510.5" y2="959" stroke="#333"/>
<text x="497" y="954.5" text-anchor="end" textLength="25.2" lengthAdjust="spacingAndGlyphs" font-size="12" fill="#333">–40.</text>
<text x="497" y="936.1" text-anchor="end" textLength="25.2" lengthAdjust="spacingAndGlyphs" font-size="12" fill="#333">–30.</text>
<text x="497" y="917.8" text-anchor="end" textLength="25.2" lengthAdjust="spacingAndGlyphs" font-size="12" fill="#333">–20.</text>
<text x="497" y="899.4" text-anchor="end" textLength="25.2" lengthAdjust="spacingAndGlyphs" font-size="12" fill="#333">–10.</text>
<text x="497" y="881.0" text-anchor="end" textLength="11.1" lengthAdjust="spacingAndGlyphs" font-size="12" fill="#333">0.</text>
<text x="497" y="862.6" text-anchor="end" textLength="18.7" lengthAdjust="spacingAndGlyphs" font-size="12" fill="#333">10.</text>
<text x="497" y="844.2" text-anchor="end" textLength="18.7" lengthAdjust="spacingAndGlyphs" font-size="12" fill="#333">20.</text>
<text x="497" y="825.9" text-anchor="end" textLength="18.7" lengthAdjust="spacingAndGlyphs" font-size="12" fill="#333">30.</text>
<text x="497" y="807.5" text-anchor="end" textLength="18.7" lengthAdjust="spacingAndGlyphs" font-size="12" fill="#333">40.</text>
<text x="511.5" y="974" text-anchor="middle" textLength="18.7" lengthAdjust="spacingAndGlyphs" font-size="12" fill="#333">40.</text>
<text x="549.0" y="974" text-anchor="middle" textLength="18.7" lengthAdjust="spacingAndGlyphs" font-size="12" fill="#333">20.</text>
<text x="586.5" y="974" text-anchor="middle" textLength="11.1" lengthAdjust="spacingAndGlyphs" font-size="12" fill="#333">0.</text>
<text x="624.0" y="974" text-anchor="middle" textLength="25.2" lengthAdjust="spacingAndGlyphs" font-size="12" fill="#333">–20.</text>
<text x="661.5" y="974" text-anchor="middle" textLength="25.2" lengthAdjust="spacingAndGlyphs" font-size="12" fill="#333">–40.</text>
<text x="585" y="992" text-anchor="middle" textLength="38" lengthAdjust="spacingAndGlyphs" font-size="12" fill="#333">KSM–X</text>
<text x="0" y="0" text-anchor="middle" textLength="38" lengthAdjust="spacingAndGlyphs" transform="translate(462,876.5) rotate(-90)" font-size="12" fill="#333">KSM–Z</text>
<clipPath id="c3"><rect x="803.5" y="802.5" width="151" height="148"/></clipPath>
<g clip-path="url(#c3)" fill="none" stroke-width="1.1">
<circle cx="879.0" cy="876.5" r="63.4" stroke="#6a3a0e" stroke-dasharray="2.5 1"/>
<circle cx="879.0" cy="876.5" r="91" stroke="#1010ff" stroke-dasharray="2.5 1"/>
</g>
<ellipse cx="879.0" cy="876.9" rx="21.6" ry="8.7" fill="none" stroke="#000" stroke-width="1.4"/>
<rect x="878.0" y="875.5" width="2" height="2" fill="#000"/>
<circle cx="884.4" cy="868.4" r="2.4" fill="#ff0000"/>
<polyline points="841,852.3 834,852.3 831.5,857.5" fill="none" stroke="#000" stroke-width="1.4"/>
<circle cx="832.5" cy="854" r="3" fill="#0000ff"/>
<path d="M829.3 848.3L837.5 856.5M837.5 848.3L829.3 856.5" stroke="#ff0000" stroke-width="1.3"/>
<rect x="803.5" y="802.5" width="151" height="148" fill="none" stroke="#333" stroke-width="1"/>
<line x1="799" y1="950.5" x2="804" y2="950.5" stroke="#333"/>
<line x1="795" y1="939.5" x2="804" y2="939.5" stroke="#333"/>
<line x1="799" y1="929.5" x2="804" y2="929.5" stroke="#333"/>
<line x1="795" y1="918.5" x2="804" y2="918.5" stroke="#333"/>
<line x1="799" y1="908.5" x2="804" y2="908.5" stroke="#333"/>
<line x1="795" y1="897.5" x2="804" y2="897.5" stroke="#333"/>
<line x1="799" y1="887.5" x2="804" y2="887.5" stroke="#333"/>
<line x1="795" y1="876.5" x2="804" y2="876.5" stroke="#333"/>
<line x1="799" y1="866.5" x2="804" y2="866.5" stroke="#333"/>
<line x1="795" y1="855.5" x2="804" y2="855.5" stroke="#333"/>
<line x1="799" y1="845.5" x2="804" y2="845.5" stroke="#333"/>
<line x1="795" y1="834.5" x2="804" y2="834.5" stroke="#333"/>
<line x1="799" y1="824.5" x2="804" y2="824.5" stroke="#333"/>
<line x1="795" y1="813.5" x2="804" y2="813.5" stroke="#333"/>
<line x1="799" y1="803.5" x2="804" y2="803.5" stroke="#333"/>
<line x1="804.5" y1="951" x2="804.5" y2="955" stroke="#333"/>
<line x1="815.5" y1="951" x2="815.5" y2="955" stroke="#333"/>
<line x1="825.5" y1="951" x2="825.5" y2="959" stroke="#333"/>
<line x1="836.5" y1="951" x2="836.5" y2="955" stroke="#333"/>
<line x1="847.5" y1="951" x2="847.5" y2="955" stroke="#333"/>
<line x1="857.5" y1="951" x2="857.5" y2="955" stroke="#333"/>
<line x1="868.5" y1="951" x2="868.5" y2="955" stroke="#333"/>
<line x1="879.5" y1="951" x2="879.5" y2="959" stroke="#333"/>
<line x1="890.5" y1="951" x2="890.5" y2="955" stroke="#333"/>
<line x1="900.5" y1="951" x2="900.5" y2="955" stroke="#333"/>
<line x1="911.5" y1="951" x2="911.5" y2="955" stroke="#333"/>
<line x1="922.5" y1="951" x2="922.5" y2="955" stroke="#333"/>
<line x1="932.5" y1="951" x2="932.5" y2="959" stroke="#333"/>
<line x1="943.5" y1="951" x2="943.5" y2="955" stroke="#333"/>
<line x1="954.5" y1="951" x2="954.5" y2="955" stroke="#333"/>
<text x="792" y="944.0" text-anchor="end" textLength="25.2" lengthAdjust="spacingAndGlyphs" font-size="12" fill="#333">–60.</text>
<text x="792" y="923.0" text-anchor="end" textLength="25.2" lengthAdjust="spacingAndGlyphs" font-size="12" fill="#333">–40.</text>
<text x="792" y="902.0" text-anchor="end" textLength="25.2" lengthAdjust="spacingAndGlyphs" font-size="12" fill="#333">–20.</text>
<text x="792" y="881.0" text-anchor="end" textLength="11.1" lengthAdjust="spacingAndGlyphs" font-size="12" fill="#333">0.</text>
<text x="792" y="860.0" text-anchor="end" textLength="18.7" lengthAdjust="spacingAndGlyphs" font-size="12" fill="#333">20.</text>
<text x="792" y="839.0" text-anchor="end" textLength="18.7" lengthAdjust="spacingAndGlyphs" font-size="12" fill="#333">40.</text>
<text x="792" y="818.0" text-anchor="end" textLength="18.7" lengthAdjust="spacingAndGlyphs" font-size="12" fill="#333">60.</text>
<text x="826.9" y="974" text-anchor="middle" textLength="25.2" lengthAdjust="spacingAndGlyphs" font-size="12" fill="#333">–50.</text>
<text x="880.5" y="974" text-anchor="middle" textLength="11.1" lengthAdjust="spacingAndGlyphs" font-size="12" fill="#333">0.</text>
<text x="934.1" y="974" text-anchor="middle" textLength="18.7" lengthAdjust="spacingAndGlyphs" font-size="12" fill="#333">50.</text>
<text x="879" y="992" text-anchor="middle" textLength="38" lengthAdjust="spacingAndGlyphs" font-size="12" fill="#333">KSM–Y</text>
<text x="0" y="0" text-anchor="middle" textLength="38" lengthAdjust="spacingAndGlyphs" transform="translate(756,876.5) rotate(-90)" font-size="12" fill="#333">KSM–Z</text>
</svg></body></html>
